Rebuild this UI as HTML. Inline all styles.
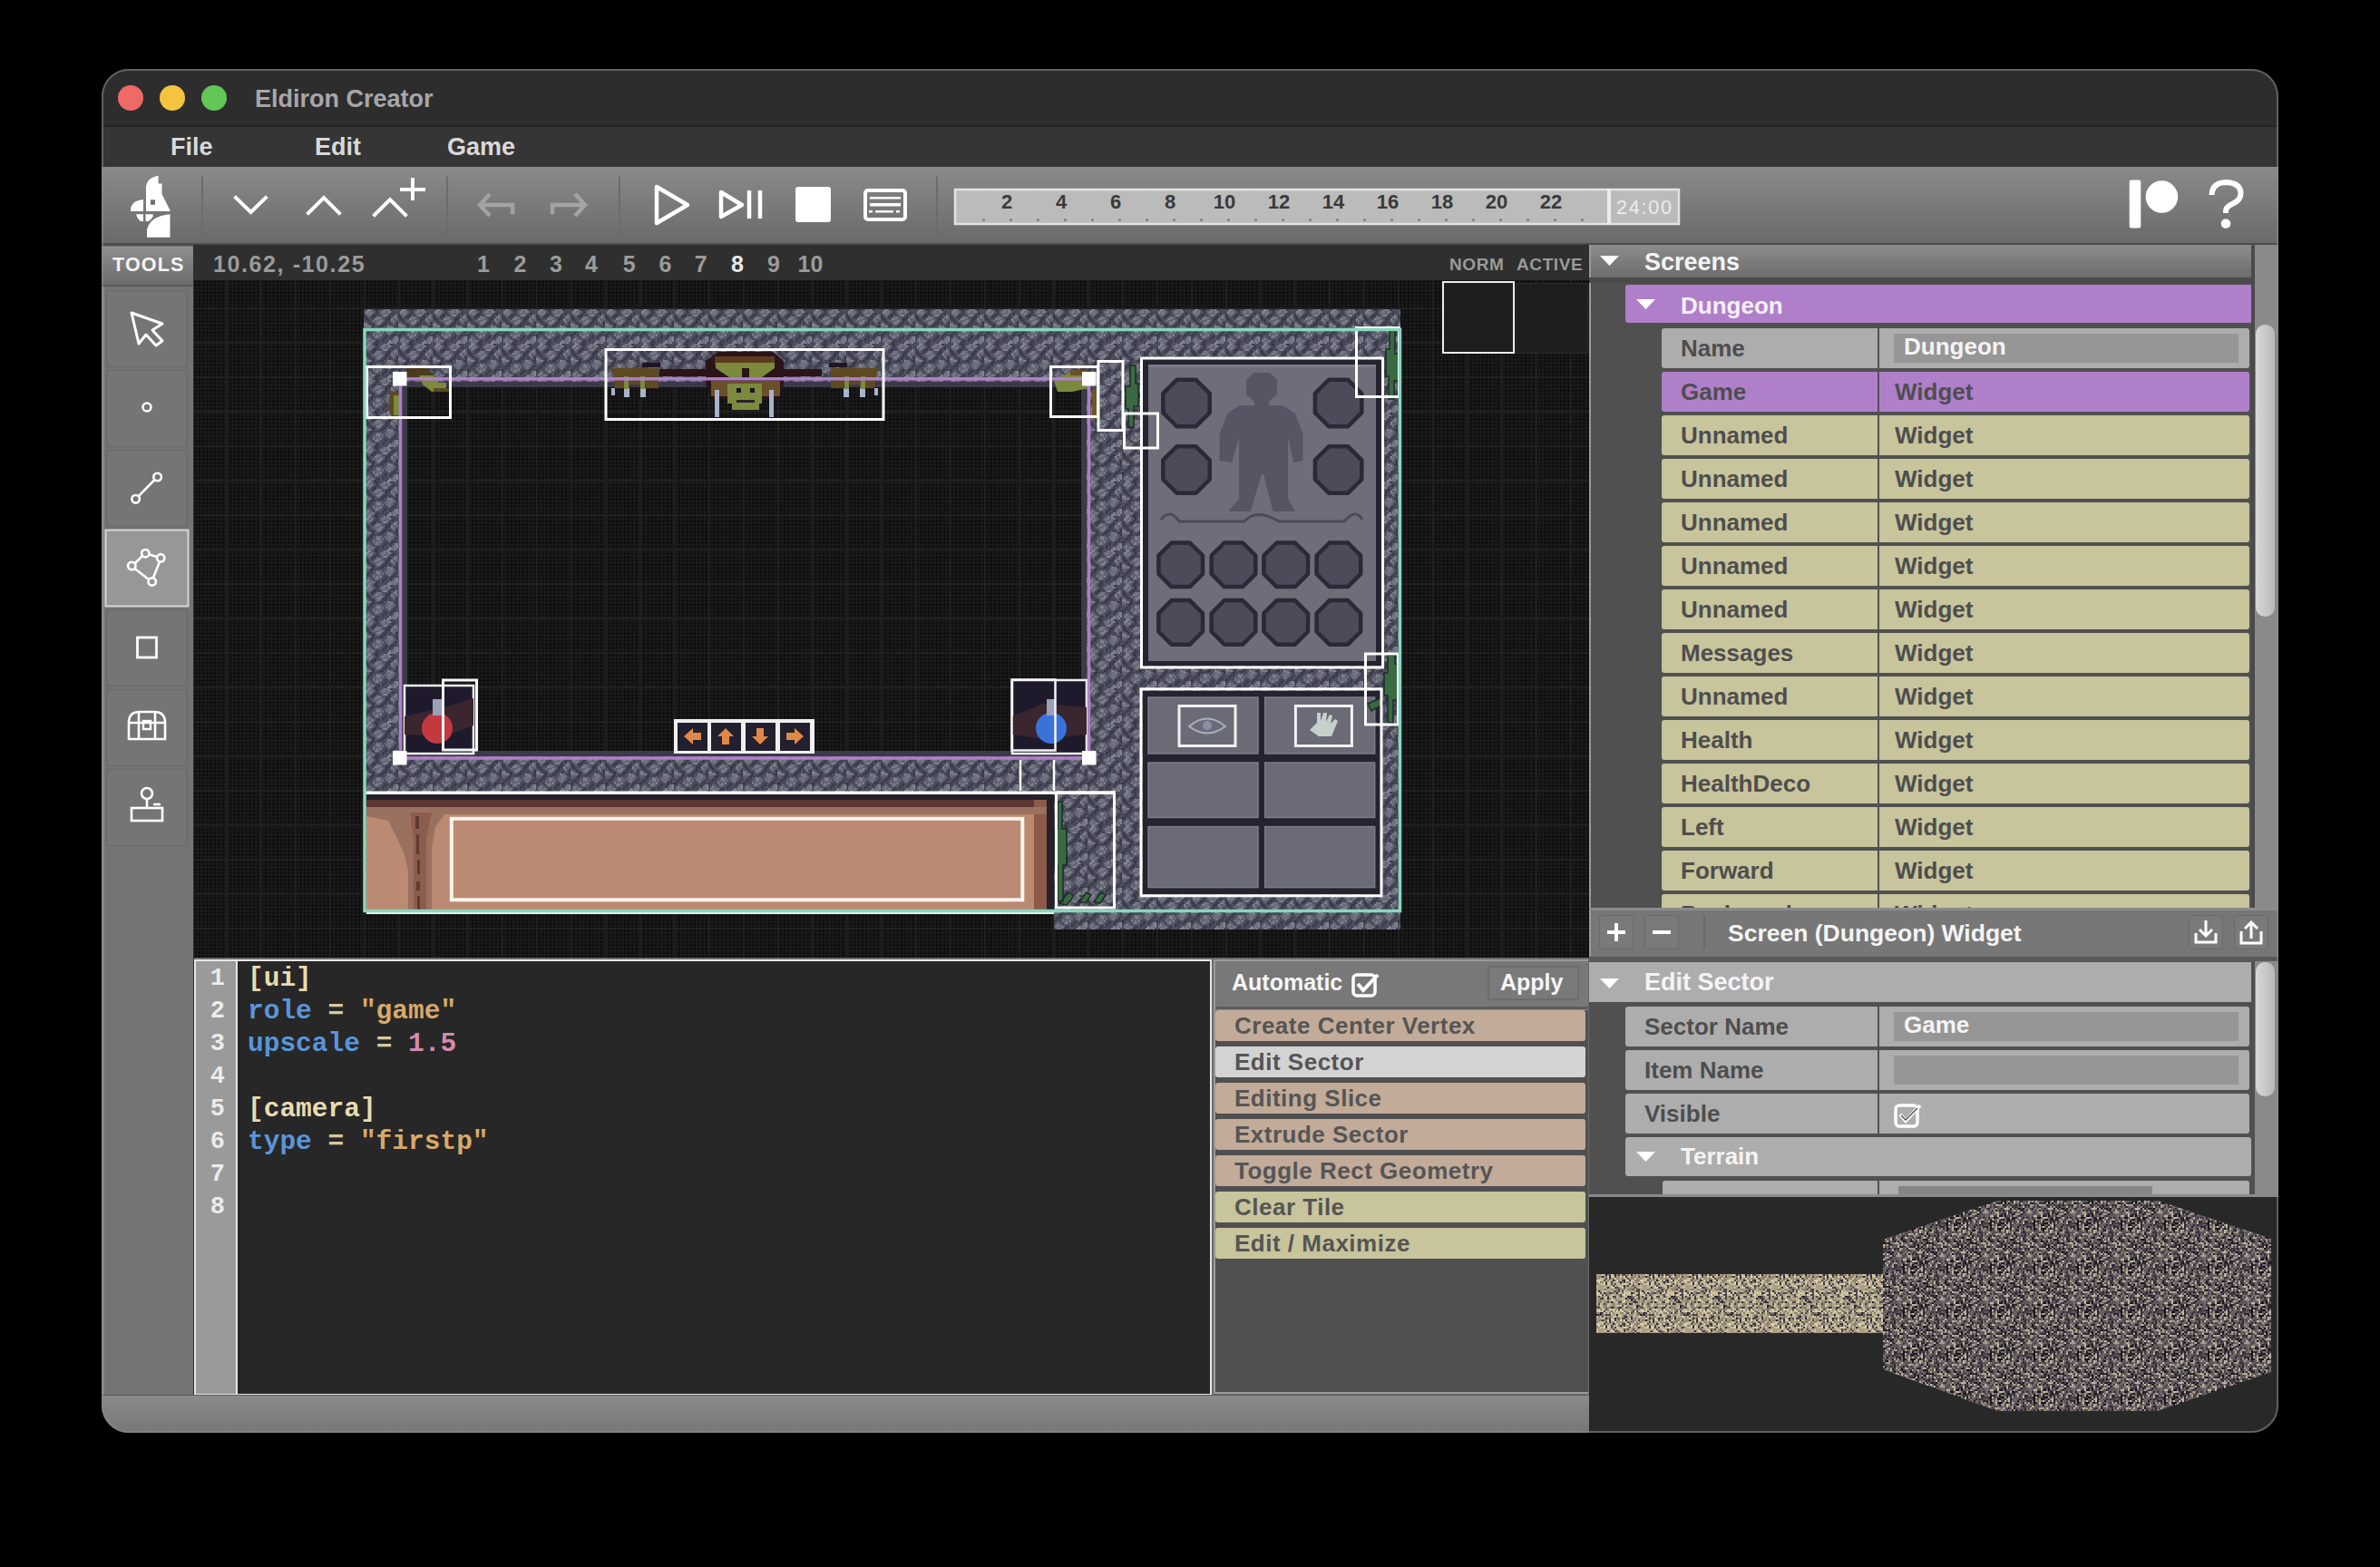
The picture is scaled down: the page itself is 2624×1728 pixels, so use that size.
<!DOCTYPE html>
<html><head><meta charset="utf-8">
<style>
*{margin:0;padding:0;box-sizing:border-box}
html,body{width:2624px;height:1728px;overflow:hidden;background:#000}
body{position:relative;font-family:"Liberation Sans",sans-serif}
.a{position:absolute}
#win{position:absolute;left:0;top:0;width:2624px;height:1728px;clip-path:inset(76px 112px 148px 112px round 30px);background:#2e2d2e}
.t{position:absolute;white-space:nowrap;line-height:1}
</style></head><body>
<div id="win">
  <!-- title bar -->
  <div class="a" style="left:112px;top:138px;width:2400px;height:2px;background:#232323"></div>
  <div class="a" style="left:130px;top:94px;width:28px;height:28px;border-radius:50%;background:#ee6a67"></div>
  <div class="a" style="left:176px;top:94px;width:28px;height:28px;border-radius:50%;background:#f5c43f"></div>
  <div class="a" style="left:222px;top:94px;width:28px;height:28px;border-radius:50%;background:#62c656"></div>
  <div class="t" style="left:281px;top:95.5px;font-size:27px;font-weight:bold;color:#a8a7a8">Eldiron Creator</div>
  <!-- menu bar -->
  <div class="a" style="left:112px;top:140px;width:2400px;height:44px;background:#353535"></div>
  <div class="t" style="left:188px;top:149px;font-size:27px;font-weight:bold;color:#d9d9d9">File</div>
  <div class="t" style="left:347px;top:149px;font-size:27px;font-weight:bold;color:#d9d9d9">Edit</div>
  <div class="t" style="left:493px;top:149px;font-size:27px;font-weight:bold;color:#d9d9d9">Game</div>
  <!-- toolbar -->
  <div class="a" style="left:112px;top:184px;width:2400px;height:84px;background:linear-gradient(#8a8a8a,#6a6a6a)"></div>
  <div class="a" style="left:112px;top:268px;width:2400px;height:3px;background:#4c4c4c"></div>


  <!-- toolbar icons -->
  <svg class="a" style="left:112px;top:184px" width="2400" height="84" viewBox="112 184 2400 84">
    <g fill="#fff">
      <path d="M161 233 V205 Q163 196 173 194 H174.5 V202.5 H178.5 V214 L187.5 232 V233 Z"/>
      <path d="M144.2 233 V229 Q146 221 158 220 V233 Z"/>
      <path d="M150.3 236.3 H158 V244 H155 Q150.3 240 150.3 236.3 Z"/>
      <path d="M160.5 236.3 H168.7 V239 Q166 243 163.5 244 H160.5 Z"/>
      <path d="M162 261.8 V253 Q166 238 187.5 236.3 V261.8 Z"/>
    </g>
    <rect x="166" y="220.3" width="5" height="5.5" fill="#6e6e6e"/>
    <g>
    <g stroke="#6c6c6c" stroke-width="2"><line x1="223" y1="194" x2="223" y2="259"/><line x1="493" y1="194" x2="493" y2="259"/><line x1="683" y1="194" x2="683" y2="259"/><line x1="1033" y1="194" x2="1033" y2="259"/></g>
    <g fill="none" stroke="#fff" stroke-width="4" stroke-linecap="square">
      <polyline points="260,218 276.5,234 293,218"/>
      <polyline points="340,235 357,218 374,235"/>
      <polyline points="413,237 430,220 447,237"/>
      <path d="M455 198 V219 M443 209 H467"/>
    </g>
    <g fill="none" stroke="#a3a3a3" stroke-width="4.5">
      <path d="M540 214 L529 226 L540 238 M529 226 H565 V236"/>
      <path d="M634 214 L645 226 L634 238 M645 226 H609 V236"/>
    </g>
    <g fill="none" stroke="#fff" stroke-width="4.5" stroke-linejoin="round">
      <path d="M724 206 L758 226 L724 246 Z"/>
      <path d="M795 212 L818 226 L795 239 Z"/>
      <path d="M826 210 V241 M838 210 V241"/>
    </g>
    <rect x="877" y="206" width="39" height="39" rx="3" fill="#fff"/>
    <rect x="954" y="210" width="44" height="32" rx="3" fill="none" stroke="#fff" stroke-width="4"/>
    <g fill="#fff"><rect x="959" y="217" width="34" height="2.5"/><rect x="959" y="224" width="34" height="3.5"/><rect x="958" y="232" width="4" height="2.5"/><rect x="965" y="232" width="20" height="2.5"/><rect x="988" y="232" width="4" height="2.5"/></g>
    <rect x="1053" y="209" width="798" height="38" fill="#bbbbbb" stroke="#e2e2e2" stroke-width="2.5"/>
    <rect x="1772" y="208" width="4" height="40" fill="#ececec"/>
    <g fill="#8a8a8a"><rect x="1083" y="241" width="3" height="3"/><rect x="1113" y="241" width="3" height="3"/><rect x="1143" y="241" width="3" height="3"/><rect x="1173" y="241" width="3" height="3"/><rect x="1203" y="241" width="3" height="3"/><rect x="1233" y="241" width="3" height="3"/><rect x="1263" y="241" width="3" height="3"/><rect x="1293" y="241" width="3" height="3"/><rect x="1323" y="241" width="3" height="3"/><rect x="1353" y="241" width="3" height="3"/><rect x="1383" y="241" width="3" height="3"/><rect x="1413" y="241" width="3" height="3"/><rect x="1443" y="241" width="3" height="3"/><rect x="1473" y="241" width="3" height="3"/><rect x="1503" y="241" width="3" height="3"/><rect x="1533" y="241" width="3" height="3"/><rect x="1563" y="241" width="3" height="3"/><rect x="1593" y="241" width="3" height="3"/><rect x="1623" y="241" width="3" height="3"/><rect x="1653" y="241" width="3" height="3"/><rect x="1683" y="241" width="3" height="3"/><rect x="1713" y="241" width="3" height="3"/><rect x="1743" y="241" width="3" height="3"/></g>
    <g font-family="Liberation Sans" font-weight="bold" font-size="22" fill="#3a3a3a" text-anchor="middle"><text x="1110" y="230">2</text><text x="1170" y="230">4</text><text x="1230" y="230">6</text><text x="1290" y="230">8</text><text x="1350" y="230">10</text><text x="1410" y="230">12</text><text x="1470" y="230">14</text><text x="1530" y="230">16</text><text x="1590" y="230">18</text><text x="1650" y="230">20</text><text x="1710" y="230">22</text></g>
    <text x="1782" y="235.5" font-family="Liberation Sans" font-size="21.5" letter-spacing="1.8" fill="#ececec">24:00</text>
    <rect x="2347.7" y="198.5" width="12.6" height="53" rx="2" fill="#fff"/>
    <circle cx="2383.4" cy="217" r="17.8" fill="#fff"/>
    <path d="M2438.5 215 Q2439 201.5 2454 201 Q2470 201.5 2470.5 213 Q2470.5 221 2461 225 Q2454 228 2454 233 V235" fill="none" stroke="#fff" stroke-width="6" stroke-linecap="butt"/>
    <circle cx="2454" cy="246.5" r="5.3" fill="#fff"/>
  </svg>

  <!-- tools panel -->
  <div class="a" style="left:112px;top:271px;width:101px;height:1268px;background:#747474"></div>
  <div class="a" style="left:112px;top:272px;width:101px;height:42px;background:linear-gradient(#8e8e8e,#6c6c6c)"></div>
  <div class="a" style="left:112px;top:314px;width:101px;height:2px;background:#5a5a5a"></div>
  <div class="t" style="left:124px;top:282px;font-size:21.5px;letter-spacing:1.2px;font-weight:bold;color:#f4f4f4">TOOLS</div>

  <!-- editor header -->
  <div class="a" style="left:213px;top:270px;width:1539px;height:40px;background:#2f2f2f"></div>
  <!-- tool buttons -->
  <div class="a" style="left:112px;top:316px;width:3px;height:1222px;background:#8a8a8a"></div>
  <svg class="a" style="left:112px;top:316px" width="101" height="1222" viewBox="112 316 101 1222">
    <rect x="117.5" y="320.5" width="89" height="84" fill="#757575" stroke="#6b6b6b" stroke-width="1.5"/><rect x="117.5" y="408.5" width="89" height="84" fill="#757575" stroke="#6b6b6b" stroke-width="1.5"/><rect x="117.5" y="496.5" width="89" height="84" fill="#757575" stroke="#6b6b6b" stroke-width="1.5"/><rect x="117.5" y="584.5" width="89" height="84" fill="#757575" stroke="#6b6b6b" stroke-width="1.5"/><rect x="117.5" y="672.5" width="89" height="84" fill="#757575" stroke="#6b6b6b" stroke-width="1.5"/><rect x="117.5" y="760.5" width="89" height="84" fill="#757575" stroke="#6b6b6b" stroke-width="1.5"/><rect x="117.5" y="848.5" width="89" height="84" fill="#757575" stroke="#6b6b6b" stroke-width="1.5"/>
    <rect x="116.5" y="584.5" width="91" height="84" fill="#979797" stroke="#d6d6d6" stroke-width="2"/>
    <g fill="none" stroke="#fff" stroke-width="2.6">
      <path d="M145 345 L179 357 L168 364 L179 376 L172 381 L161 369 L153 379 Z" stroke-linejoin="round" stroke-width="3"/>
      <circle cx="162" cy="449" r="4.5"/>
      <circle cx="173.6" cy="526" r="4.3"/><circle cx="149.6" cy="550.3" r="4.3"/><line x1="170.5" y1="529" x2="152.6" y2="547.3"/>
      <circle cx="160.3" cy="610.2" r="4.2"/><circle cx="177.2" cy="615.3" r="4.2"/><circle cx="145.3" cy="624" r="4.2"/><circle cx="167.7" cy="641.4" r="4.2"/>
      <path d="M149 621 L157 613 M164.5 611.5 L173 614 M176 619.5 L169 637 M164 639 L148.5 627"/>
      <rect x="151.5" y="703" width="21" height="22" stroke-width="2.8"/>
      <path d="M142 815 V797 Q142 785 154 785 H170 Q182 785 182 797 V815 Z M142 797 H182 M153 785 V815 M171 785 V815" stroke-width="2.6"/>
      <rect x="158" y="795" width="8" height="9" stroke-width="2.4"/>
      <circle cx="162" cy="875" r="6"/><line x1="162" y1="881" x2="162" y2="891"/><rect x="145" y="891" width="34" height="14"/><line x1="169" y1="887" x2="177" y2="887"/>
    </g>
  </svg>
  <!-- editor header texts -->
  <div class="t" style="left:235px;top:279px;font-size:25px;font-weight:bold;letter-spacing:1.6px;color:#9b9b9b">10.62, -10.25</div>
  <div class="t" style="left:493px;width:80px;text-align:center;top:279px;font-size:25px;font-weight:bold;color:#9b9b9b">1</div><div class="t" style="left:533.5px;width:80px;text-align:center;top:279px;font-size:25px;font-weight:bold;color:#9b9b9b">2</div><div class="t" style="left:573px;width:80px;text-align:center;top:279px;font-size:25px;font-weight:bold;color:#9b9b9b">3</div><div class="t" style="left:612px;width:80px;text-align:center;top:279px;font-size:25px;font-weight:bold;color:#9b9b9b">4</div><div class="t" style="left:653.6px;width:80px;text-align:center;top:279px;font-size:25px;font-weight:bold;color:#9b9b9b">5</div><div class="t" style="left:693.5px;width:80px;text-align:center;top:279px;font-size:25px;font-weight:bold;color:#9b9b9b">6</div><div class="t" style="left:732.6px;width:80px;text-align:center;top:279px;font-size:25px;font-weight:bold;color:#9b9b9b">7</div><div class="t" style="left:773px;width:80px;text-align:center;top:279px;font-size:25px;font-weight:bold;color:#e8e8e8">8</div><div class="t" style="left:813px;width:80px;text-align:center;top:279px;font-size:25px;font-weight:bold;color:#9b9b9b">9</div><div class="t" style="left:853.5px;width:80px;text-align:center;top:279px;font-size:25px;font-weight:bold;color:#9b9b9b">10</div>
  <div class="t" style="left:1598px;top:281.5px;font-size:19px;letter-spacing:0.6px;font-weight:bold;color:#9a9a9a">NORM</div>
  <div class="t" style="left:1672px;top:281.5px;font-size:19px;letter-spacing:0.6px;font-weight:bold;color:#9a9a9a">ACTIVE</div>

  <!-- map grid -->
  <svg class="a" style="left:214px;top:309px" width="1538" height="748">
    <defs>
      <pattern id="dots" x="0" y="0" width="4.3" height="4" patternUnits="userSpaceOnUse"><rect width="4.3" height="4" fill="#1a1a1a"/><rect x="0.5" y="0.5" width="2.2" height="2.2" fill="#080808"/></pattern>
      <pattern id="maj" x="-1.2" y="-6" width="38" height="38" patternUnits="userSpaceOnUse"><rect x="36" y="0" width="2" height="38" fill="#202020"/><rect x="0" y="36" width="38" height="2" fill="#202020"/></pattern>
    </defs>
    <rect width="1538" height="748" fill="url(#dots)"/>
    <rect width="1538" height="748" fill="url(#maj)"/>
  </svg>
  <div class="a" style="left:1590px;top:310px;width:80px;height:80px;background:#1e1e1e;border:2.5px solid #ececec"></div>
  <div class="a" style="left:1671px;top:312px;width:80px;height:78px;background:#1e1e1e;border:1px solid #2e2e2e"></div>
  <!-- MAP -->
  <svg class="a" style="left:214px;top:309px" width="1538" height="748" viewBox="214 309 1538 748">
    <defs><pattern id="stone" x="401" y="341" width="38" height="38" patternUnits="userSpaceOnUse"><rect width="38" height="38" fill="#4a4c5c"/><rect x="4" y="0" width="2" height="2" fill="#828490"/><rect x="6" y="0" width="2" height="2" fill="#828490"/><rect x="8" y="0" width="2" height="2" fill="#5e606e"/><rect x="12" y="0" width="2" height="2" fill="#383846"/><rect x="14" y="0" width="2" height="2" fill="#383846"/><rect x="20" y="0" width="2" height="2" fill="#5e606e"/><rect x="22" y="0" width="2" height="2" fill="#767886"/><rect x="24" y="0" width="2" height="2" fill="#6c6e7c"/><rect x="26" y="0" width="2" height="2" fill="#828490"/><rect x="28" y="0" width="2" height="2" fill="#545666"/><rect x="30" y="0" width="2" height="2" fill="#383846"/><rect x="32" y="0" width="2" height="2" fill="#4e5060"/><rect x="36" y="0" width="2" height="2" fill="#4e5060"/><rect x="2" y="2" width="2" height="2" fill="#828490"/><rect x="4" y="2" width="2" height="2" fill="#828490"/><rect x="6" y="2" width="2" height="2" fill="#5e606e"/><rect x="8" y="2" width="2" height="2" fill="#767886"/><rect x="10" y="2" width="2" height="2" fill="#5e606e"/><rect x="12" y="2" width="2" height="2" fill="#4e5060"/><rect x="14" y="2" width="2" height="2" fill="#383846"/><rect x="16" y="2" width="2" height="2" fill="#4e5060"/><rect x="18" y="2" width="2" height="2" fill="#6c6e7c"/><rect x="20" y="2" width="2" height="2" fill="#767886"/><rect x="22" y="2" width="2" height="2" fill="#767886"/><rect x="24" y="2" width="2" height="2" fill="#5e606e"/><rect x="26" y="2" width="2" height="2" fill="#6c6e7c"/><rect x="28" y="2" width="2" height="2" fill="#828490"/><rect x="30" y="2" width="2" height="2" fill="#545666"/><rect x="32" y="2" width="2" height="2" fill="#40404e"/><rect x="36" y="2" width="2" height="2" fill="#464858"/><rect x="2" y="4" width="2" height="2" fill="#767886"/><rect x="4" y="4" width="2" height="2" fill="#646674"/><rect x="6" y="4" width="2" height="2" fill="#828490"/><rect x="8" y="4" width="2" height="2" fill="#6c6e7c"/><rect x="10" y="4" width="2" height="2" fill="#4e5060"/><rect x="12" y="4" width="2" height="2" fill="#40404e"/><rect x="14" y="4" width="2" height="2" fill="#40404e"/><rect x="18" y="4" width="2" height="2" fill="#5e606e"/><rect x="20" y="4" width="2" height="2" fill="#6c6e7c"/><rect x="22" y="4" width="2" height="2" fill="#646674"/><rect x="24" y="4" width="2" height="2" fill="#646674"/><rect x="26" y="4" width="2" height="2" fill="#767886"/><rect x="30" y="4" width="2" height="2" fill="#40404e"/><rect x="32" y="4" width="2" height="2" fill="#383846"/><rect x="34" y="4" width="2" height="2" fill="#4e5060"/><rect x="0" y="6" width="2" height="2" fill="#383846"/><rect x="4" y="6" width="2" height="2" fill="#6c6e7c"/><rect x="6" y="6" width="2" height="2" fill="#646674"/><rect x="10" y="6" width="2" height="2" fill="#383846"/><rect x="12" y="6" width="2" height="2" fill="#383846"/><rect x="14" y="6" width="2" height="2" fill="#4e5060"/><rect x="16" y="6" width="2" height="2" fill="#464858"/><rect x="18" y="6" width="2" height="2" fill="#464858"/><rect x="20" y="6" width="2" height="2" fill="#6c6e7c"/><rect x="22" y="6" width="2" height="2" fill="#828490"/><rect x="24" y="6" width="2" height="2" fill="#828490"/><rect x="28" y="6" width="2" height="2" fill="#40404e"/><rect x="30" y="6" width="2" height="2" fill="#4e5060"/><rect x="34" y="6" width="2" height="2" fill="#767886"/><rect x="36" y="6" width="2" height="2" fill="#646674"/><rect x="0" y="8" width="2" height="2" fill="#40404e"/><rect x="2" y="8" width="2" height="2" fill="#383846"/><rect x="4" y="8" width="2" height="2" fill="#545666"/><rect x="6" y="8" width="2" height="2" fill="#545666"/><rect x="8" y="8" width="2" height="2" fill="#383846"/><rect x="10" y="8" width="2" height="2" fill="#40404e"/><rect x="12" y="8" width="2" height="2" fill="#4e5060"/><rect x="14" y="8" width="2" height="2" fill="#767886"/><rect x="16" y="8" width="2" height="2" fill="#767886"/><rect x="18" y="8" width="2" height="2" fill="#6c6e7c"/><rect x="20" y="8" width="2" height="2" fill="#4e5060"/><rect x="22" y="8" width="2" height="2" fill="#4e5060"/><rect x="26" y="8" width="2" height="2" fill="#40404e"/><rect x="28" y="8" width="2" height="2" fill="#383846"/><rect x="32" y="8" width="2" height="2" fill="#767886"/><rect x="34" y="8" width="2" height="2" fill="#828490"/><rect x="36" y="8" width="2" height="2" fill="#5e606e"/><rect x="0" y="10" width="2" height="2" fill="#464858"/><rect x="2" y="10" width="2" height="2" fill="#383846"/><rect x="4" y="10" width="2" height="2" fill="#40404e"/><rect x="8" y="10" width="2" height="2" fill="#4e5060"/><rect x="12" y="10" width="2" height="2" fill="#828490"/><rect x="14" y="10" width="2" height="2" fill="#767886"/><rect x="16" y="10" width="2" height="2" fill="#6c6e7c"/><rect x="18" y="10" width="2" height="2" fill="#646674"/><rect x="20" y="10" width="2" height="2" fill="#5e606e"/><rect x="22" y="10" width="2" height="2" fill="#545666"/><rect x="24" y="10" width="2" height="2" fill="#383846"/><rect x="26" y="10" width="2" height="2" fill="#383846"/><rect x="28" y="10" width="2" height="2" fill="#464858"/><rect x="30" y="10" width="2" height="2" fill="#828490"/><rect x="32" y="10" width="2" height="2" fill="#5e606e"/><rect x="34" y="10" width="2" height="2" fill="#5e606e"/><rect x="36" y="10" width="2" height="2" fill="#6c6e7c"/><rect x="0" y="12" width="2" height="2" fill="#4e5060"/><rect x="2" y="12" width="2" height="2" fill="#464858"/><rect x="4" y="12" width="2" height="2" fill="#383846"/><rect x="8" y="12" width="2" height="2" fill="#545666"/><rect x="10" y="12" width="2" height="2" fill="#6c6e7c"/><rect x="12" y="12" width="2" height="2" fill="#5e606e"/><rect x="14" y="12" width="2" height="2" fill="#646674"/><rect x="16" y="12" width="2" height="2" fill="#646674"/><rect x="18" y="12" width="2" height="2" fill="#828490"/><rect x="20" y="12" width="2" height="2" fill="#6c6e7c"/><rect x="22" y="12" width="2" height="2" fill="#4e5060"/><rect x="24" y="12" width="2" height="2" fill="#383846"/><rect x="26" y="12" width="2" height="2" fill="#464858"/><rect x="30" y="12" width="2" height="2" fill="#767886"/><rect x="32" y="12" width="2" height="2" fill="#6c6e7c"/><rect x="34" y="12" width="2" height="2" fill="#5e606e"/><rect x="36" y="12" width="2" height="2" fill="#545666"/><rect x="0" y="14" width="2" height="2" fill="#646674"/><rect x="2" y="14" width="2" height="2" fill="#5e606e"/><rect x="6" y="14" width="2" height="2" fill="#383846"/><rect x="12" y="14" width="2" height="2" fill="#5e606e"/><rect x="14" y="14" width="2" height="2" fill="#767886"/><rect x="16" y="14" width="2" height="2" fill="#828490"/><rect x="18" y="14" width="2" height="2" fill="#767886"/><rect x="20" y="14" width="2" height="2" fill="#464858"/><rect x="22" y="14" width="2" height="2" fill="#40404e"/><rect x="24" y="14" width="2" height="2" fill="#383846"/><rect x="28" y="14" width="2" height="2" fill="#464858"/><rect x="30" y="14" width="2" height="2" fill="#464858"/><rect x="32" y="14" width="2" height="2" fill="#767886"/><rect x="36" y="14" width="2" height="2" fill="#383846"/><rect x="0" y="16" width="2" height="2" fill="#828490"/><rect x="2" y="16" width="2" height="2" fill="#828490"/><rect x="4" y="16" width="2" height="2" fill="#5e606e"/><rect x="6" y="16" width="2" height="2" fill="#4e5060"/><rect x="8" y="16" width="2" height="2" fill="#40404e"/><rect x="10" y="16" width="2" height="2" fill="#383846"/><rect x="12" y="16" width="2" height="2" fill="#4e5060"/><rect x="14" y="16" width="2" height="2" fill="#6c6e7c"/><rect x="16" y="16" width="2" height="2" fill="#6c6e7c"/><rect x="20" y="16" width="2" height="2" fill="#40404e"/><rect x="22" y="16" width="2" height="2" fill="#383846"/><rect x="26" y="16" width="2" height="2" fill="#545666"/><rect x="28" y="16" width="2" height="2" fill="#40404e"/><rect x="34" y="16" width="2" height="2" fill="#545666"/><rect x="36" y="16" width="2" height="2" fill="#383846"/><rect x="0" y="18" width="2" height="2" fill="#6c6e7c"/><rect x="2" y="18" width="2" height="2" fill="#767886"/><rect x="4" y="18" width="2" height="2" fill="#767886"/><rect x="6" y="18" width="2" height="2" fill="#828490"/><rect x="10" y="18" width="2" height="2" fill="#383846"/><rect x="12" y="18" width="2" height="2" fill="#545666"/><rect x="14" y="18" width="2" height="2" fill="#464858"/><rect x="16" y="18" width="2" height="2" fill="#464858"/><rect x="18" y="18" width="2" height="2" fill="#383846"/><rect x="20" y="18" width="2" height="2" fill="#383846"/><rect x="22" y="18" width="2" height="2" fill="#545666"/><rect x="26" y="18" width="2" height="2" fill="#828490"/><rect x="28" y="18" width="2" height="2" fill="#767886"/><rect x="30" y="18" width="2" height="2" fill="#6c6e7c"/><rect x="32" y="18" width="2" height="2" fill="#4e5060"/><rect x="34" y="18" width="2" height="2" fill="#383846"/><rect x="36" y="18" width="2" height="2" fill="#40404e"/><rect x="0" y="20" width="2" height="2" fill="#646674"/><rect x="2" y="20" width="2" height="2" fill="#5e606e"/><rect x="4" y="20" width="2" height="2" fill="#5e606e"/><rect x="6" y="20" width="2" height="2" fill="#464858"/><rect x="8" y="20" width="2" height="2" fill="#383846"/><rect x="10" y="20" width="2" height="2" fill="#40404e"/><rect x="12" y="20" width="2" height="2" fill="#464858"/><rect x="16" y="20" width="2" height="2" fill="#40404e"/><rect x="22" y="20" width="2" height="2" fill="#464858"/><rect x="24" y="20" width="2" height="2" fill="#5e606e"/><rect x="26" y="20" width="2" height="2" fill="#6c6e7c"/><rect x="28" y="20" width="2" height="2" fill="#6c6e7c"/><rect x="30" y="20" width="2" height="2" fill="#828490"/><rect x="32" y="20" width="2" height="2" fill="#646674"/><rect x="34" y="20" width="2" height="2" fill="#545666"/><rect x="36" y="20" width="2" height="2" fill="#383846"/><rect x="0" y="22" width="2" height="2" fill="#4e5060"/><rect x="2" y="22" width="2" height="2" fill="#5e606e"/><rect x="4" y="22" width="2" height="2" fill="#4e5060"/><rect x="6" y="22" width="2" height="2" fill="#40404e"/><rect x="8" y="22" width="2" height="2" fill="#383846"/><rect x="10" y="22" width="2" height="2" fill="#545666"/><rect x="12" y="22" width="2" height="2" fill="#545666"/><rect x="14" y="22" width="2" height="2" fill="#767886"/><rect x="16" y="22" width="2" height="2" fill="#6c6e7c"/><rect x="18" y="22" width="2" height="2" fill="#6c6e7c"/><rect x="22" y="22" width="2" height="2" fill="#5e606e"/><rect x="24" y="22" width="2" height="2" fill="#646674"/><rect x="26" y="22" width="2" height="2" fill="#6c6e7c"/><rect x="28" y="22" width="2" height="2" fill="#767886"/><rect x="30" y="22" width="2" height="2" fill="#646674"/><rect x="32" y="22" width="2" height="2" fill="#646674"/><rect x="34" y="22" width="2" height="2" fill="#4e5060"/><rect x="0" y="24" width="2" height="2" fill="#4e5060"/><rect x="4" y="24" width="2" height="2" fill="#383846"/><rect x="6" y="24" width="2" height="2" fill="#40404e"/><rect x="10" y="24" width="2" height="2" fill="#4e5060"/><rect x="12" y="24" width="2" height="2" fill="#5e606e"/><rect x="14" y="24" width="2" height="2" fill="#828490"/><rect x="16" y="24" width="2" height="2" fill="#828490"/><rect x="18" y="24" width="2" height="2" fill="#5e606e"/><rect x="20" y="24" width="2" height="2" fill="#6c6e7c"/><rect x="24" y="24" width="2" height="2" fill="#6c6e7c"/><rect x="26" y="24" width="2" height="2" fill="#6c6e7c"/><rect x="28" y="24" width="2" height="2" fill="#6c6e7c"/><rect x="30" y="24" width="2" height="2" fill="#6c6e7c"/><rect x="32" y="24" width="2" height="2" fill="#545666"/><rect x="34" y="24" width="2" height="2" fill="#40404e"/><rect x="36" y="24" width="2" height="2" fill="#40404e"/><rect x="2" y="26" width="2" height="2" fill="#40404e"/><rect x="4" y="26" width="2" height="2" fill="#40404e"/><rect x="10" y="26" width="2" height="2" fill="#6c6e7c"/><rect x="12" y="26" width="2" height="2" fill="#5e606e"/><rect x="14" y="26" width="2" height="2" fill="#5e606e"/><rect x="16" y="26" width="2" height="2" fill="#6c6e7c"/><rect x="18" y="26" width="2" height="2" fill="#646674"/><rect x="20" y="26" width="2" height="2" fill="#5e606e"/><rect x="22" y="26" width="2" height="2" fill="#4e5060"/><rect x="26" y="26" width="2" height="2" fill="#6c6e7c"/><rect x="28" y="26" width="2" height="2" fill="#767886"/><rect x="30" y="26" width="2" height="2" fill="#4e5060"/><rect x="32" y="26" width="2" height="2" fill="#40404e"/><rect x="34" y="26" width="2" height="2" fill="#40404e"/><rect x="36" y="26" width="2" height="2" fill="#545666"/><rect x="0" y="28" width="2" height="2" fill="#383846"/><rect x="2" y="28" width="2" height="2" fill="#40404e"/><rect x="4" y="28" width="2" height="2" fill="#545666"/><rect x="6" y="28" width="2" height="2" fill="#464858"/><rect x="10" y="28" width="2" height="2" fill="#767886"/><rect x="12" y="28" width="2" height="2" fill="#5e606e"/><rect x="14" y="28" width="2" height="2" fill="#767886"/><rect x="16" y="28" width="2" height="2" fill="#646674"/><rect x="18" y="28" width="2" height="2" fill="#828490"/><rect x="22" y="28" width="2" height="2" fill="#464858"/><rect x="24" y="28" width="2" height="2" fill="#40404e"/><rect x="28" y="28" width="2" height="2" fill="#545666"/><rect x="30" y="28" width="2" height="2" fill="#383846"/><rect x="32" y="28" width="2" height="2" fill="#40404e"/><rect x="34" y="28" width="2" height="2" fill="#464858"/><rect x="36" y="28" width="2" height="2" fill="#464858"/><rect x="0" y="30" width="2" height="2" fill="#40404e"/><rect x="2" y="30" width="2" height="2" fill="#464858"/><rect x="4" y="30" width="2" height="2" fill="#5e606e"/><rect x="6" y="30" width="2" height="2" fill="#646674"/><rect x="8" y="30" width="2" height="2" fill="#464858"/><rect x="10" y="30" width="2" height="2" fill="#464858"/><rect x="12" y="30" width="2" height="2" fill="#767886"/><rect x="14" y="30" width="2" height="2" fill="#828490"/><rect x="16" y="30" width="2" height="2" fill="#646674"/><rect x="18" y="30" width="2" height="2" fill="#4e5060"/><rect x="20" y="30" width="2" height="2" fill="#4e5060"/><rect x="22" y="30" width="2" height="2" fill="#40404e"/><rect x="24" y="30" width="2" height="2" fill="#383846"/><rect x="26" y="30" width="2" height="2" fill="#4e5060"/><rect x="28" y="30" width="2" height="2" fill="#40404e"/><rect x="30" y="30" width="2" height="2" fill="#40404e"/><rect x="32" y="30" width="2" height="2" fill="#545666"/><rect x="34" y="30" width="2" height="2" fill="#767886"/><rect x="36" y="30" width="2" height="2" fill="#828490"/><rect x="2" y="32" width="2" height="2" fill="#5e606e"/><rect x="4" y="32" width="2" height="2" fill="#828490"/><rect x="6" y="32" width="2" height="2" fill="#646674"/><rect x="8" y="32" width="2" height="2" fill="#5e606e"/><rect x="12" y="32" width="2" height="2" fill="#545666"/><rect x="14" y="32" width="2" height="2" fill="#4e5060"/><rect x="16" y="32" width="2" height="2" fill="#4e5060"/><rect x="18" y="32" width="2" height="2" fill="#545666"/><rect x="20" y="32" width="2" height="2" fill="#383846"/><rect x="22" y="32" width="2" height="2" fill="#40404e"/><rect x="26" y="32" width="2" height="2" fill="#545666"/><rect x="28" y="32" width="2" height="2" fill="#40404e"/><rect x="32" y="32" width="2" height="2" fill="#6c6e7c"/><rect x="34" y="32" width="2" height="2" fill="#767886"/><rect x="36" y="32" width="2" height="2" fill="#828490"/><rect x="2" y="34" width="2" height="2" fill="#767886"/><rect x="4" y="34" width="2" height="2" fill="#6c6e7c"/><rect x="6" y="34" width="2" height="2" fill="#646674"/><rect x="8" y="34" width="2" height="2" fill="#767886"/><rect x="10" y="34" width="2" height="2" fill="#767886"/><rect x="12" y="34" width="2" height="2" fill="#4e5060"/><rect x="14" y="34" width="2" height="2" fill="#383846"/><rect x="16" y="34" width="2" height="2" fill="#40404e"/><rect x="18" y="34" width="2" height="2" fill="#4e5060"/><rect x="20" y="34" width="2" height="2" fill="#40404e"/><rect x="22" y="34" width="2" height="2" fill="#4e5060"/><rect x="24" y="34" width="2" height="2" fill="#464858"/><rect x="26" y="34" width="2" height="2" fill="#464858"/><rect x="28" y="34" width="2" height="2" fill="#828490"/><rect x="30" y="34" width="2" height="2" fill="#646674"/><rect x="32" y="34" width="2" height="2" fill="#767886"/><rect x="34" y="34" width="2" height="2" fill="#6c6e7c"/><rect x="36" y="34" width="2" height="2" fill="#828490"/><rect x="2" y="36" width="2" height="2" fill="#4e5060"/><rect x="4" y="36" width="2" height="2" fill="#767886"/><rect x="6" y="36" width="2" height="2" fill="#767886"/><rect x="8" y="36" width="2" height="2" fill="#646674"/><rect x="10" y="36" width="2" height="2" fill="#545666"/><rect x="12" y="36" width="2" height="2" fill="#383846"/><rect x="14" y="36" width="2" height="2" fill="#40404e"/><rect x="16" y="36" width="2" height="2" fill="#464858"/><rect x="18" y="36" width="2" height="2" fill="#4e5060"/><rect x="24" y="36" width="2" height="2" fill="#464858"/><rect x="26" y="36" width="2" height="2" fill="#828490"/><rect x="28" y="36" width="2" height="2" fill="#828490"/><rect x="30" y="36" width="2" height="2" fill="#767886"/><rect x="32" y="36" width="2" height="2" fill="#6c6e7c"/><rect x="34" y="36" width="2" height="2" fill="#828490"/></pattern>
      <pattern id="dots2" x="0" y="0" width="4.3" height="4" patternUnits="userSpaceOnUse"><rect width="4.3" height="4" fill="#1a1a1a"/><rect x="0.5" y="0.5" width="2.2" height="2.2" fill="#0a0a0a"/></pattern>
    </defs>
    <path fill="url(#stone)" fill-rule="evenodd" d="M401 341 H1544 V1025 H1162 V1006 H401 Z M443 421 H1198 V834 H443 Z"/>
    <!-- interior shadow -->
    <path fill="#3a3a48" fill-rule="evenodd" d="M443 421 H1198 V834 H443 Z M449 427 H1192 V828 H449 Z"/>
    <!-- brown message panel -->
    <rect x="404" y="876" width="758" height="128" fill="#25202a"/>
    <rect x="404" y="882" width="750" height="122" fill="#bb8a72"/>
    <rect x="404" y="882" width="750" height="8" fill="#5c3530"/>
    <rect x="404" y="890" width="750" height="6" fill="#8c5a48"/>
    <rect x="1140" y="882" width="14" height="122" fill="#8c5a48"/>
    <path d="M404 890 H1154 V898 H490 L480 912 L476 935 V1004 H450 V960 L446 942 L438 925 L428 905 L404 900 Z" fill="#9a705e"/><path d="M452 896 H476 L470 925 V1004 H456 V925 Z" fill="#8c5c4c"/>
    <g fill="#5e3a32"><rect x="458" y="900" width="4" height="14"/><rect x="459" y="920" width="3" height="22"/><rect x="460" y="948" width="3" height="16"/><rect x="459" y="972" width="4" height="10"/><rect x="460" y="988" width="3" height="16"/></g>
    <rect x="497.8" y="902.8" width="629.5" height="89.5" fill="none" stroke="#fbf3ee" stroke-width="4"/>
    <rect x="402.5" y="872.5" width="827" height="3.5" fill="#fff"/>
    
    <!-- inventory panel -->
    <rect x="1260" y="396" width="263" height="338" fill="#25232f"/>
    <rect x="1266" y="402" width="251" height="327" fill="#6e6e7b"/>
    <rect x="1266" y="402" width="251" height="3" fill="#7c7c88"/>
    <g fill="#4b4b5a" stroke="#2a2a36" stroke-width="4.5" stroke-linejoin="round"><polygon points="1333.7,455.1 1318.6,470.2 1297.4,470.2 1282.3,455.1 1282.3,433.9 1297.4,418.8 1318.6,418.8 1333.7,433.9"/><polygon points="1501.3,455.1 1486.2,470.2 1465.0,470.2 1449.9,455.1 1449.9,433.9 1465.0,418.8 1486.2,418.8 1501.3,433.9"/><polygon points="1333.7,528.6 1318.6,543.7 1297.4,543.7 1282.3,528.6 1282.3,507.4 1297.4,492.3 1318.6,492.3 1333.7,507.4"/><polygon points="1501.3,528.6 1486.2,543.7 1465.0,543.7 1449.9,528.6 1449.9,507.4 1465.0,492.3 1486.2,492.3 1501.3,507.4"/><polygon points="1326.0,632.9 1311.8,647.1 1291.6,647.1 1277.4,632.9 1277.4,612.7 1291.6,598.5 1311.8,598.5 1326.0,612.7"/><polygon points="1384.3,632.9 1370.1,647.1 1349.9,647.1 1335.7,632.9 1335.7,612.7 1349.9,598.5 1370.1,598.5 1384.3,612.7"/><polygon points="1442.0,632.9 1427.8,647.1 1407.6,647.1 1393.4,632.9 1393.4,612.7 1407.6,598.5 1427.8,598.5 1442.0,612.7"/><polygon points="1500.2,632.9 1486.0,647.1 1465.8,647.1 1451.6,632.9 1451.6,612.7 1465.8,598.5 1486.0,598.5 1500.2,612.7"/><polygon points="1326.0,696.5 1311.8,710.7 1291.6,710.7 1277.4,696.5 1277.4,676.3 1291.6,662.1 1311.8,662.1 1326.0,676.3"/><polygon points="1384.3,696.5 1370.1,710.7 1349.9,710.7 1335.7,696.5 1335.7,676.3 1349.9,662.1 1370.1,662.1 1384.3,676.3"/><polygon points="1442.0,696.5 1427.8,710.7 1407.6,710.7 1393.4,696.5 1393.4,676.3 1407.6,662.1 1427.8,662.1 1442.0,676.3"/><polygon points="1500.2,696.5 1486.0,710.7 1465.8,710.7 1451.6,696.5 1451.6,676.3 1465.8,662.1 1486.0,662.1 1500.2,676.3"/></g>
    <path fill="#555564" d="M1382 411 H1400 L1408 419 V435 L1399 443 V447 H1414 L1428 456 L1436.6 479 V508 L1426 510 L1420 482 V550 L1428 564 H1403.5 L1393 523 H1391 L1378.7 564 H1354 L1366 550 V482 L1358 510 L1344.5 508 V479 L1353 456 L1367 447 H1383 V443 L1374 435 V419 Z"/>
    <path fill="none" stroke="#4a4a58" stroke-width="3" d="M1280 573 Q1290 560 1300 575 H1372 Q1385 560 1410 575 H1482 Q1495 560 1502 573"/>
    <!-- action panel -->
    <rect x="1260" y="762" width="262" height="224" fill="#25232f"/>
    <g fill="#6b6b77" stroke="#7c7c88" stroke-width="1.5">
      <rect x="1266" y="769" width="121" height="62"/><rect x="1394.7" y="769" width="121" height="62"/>
      <rect x="1266" y="841" width="121" height="60.5"/><rect x="1394.7" y="841" width="121" height="60.5"/>
      <rect x="1266" y="911.6" width="121" height="67"/><rect x="1394.7" y="911.6" width="121" height="67"/>
    </g>
    <rect x="1300" y="778.5" width="62" height="44" fill="#6b6b77" stroke="#f2f2f2" stroke-width="3"/>
    <rect x="1428.4" y="778.5" width="62" height="44" fill="#6b6b77" stroke="#f2f2f2" stroke-width="3"/>
    <path d="M1311 801 Q1331 784 1351 801 Q1331 816 1311 801 Z" fill="none" stroke="#a8b0c0" stroke-width="2"/>
    <circle cx="1331" cy="800" r="5" fill="#8890a8"/>
    <path d="M1444 805 L1452 797 L1452 786 L1456 786 L1456 795 L1459 786 L1463 786 L1462 796 L1466 788 L1469 789 L1467 798 L1472 793 L1475 795 L1468 812 H1454 Z" fill="#c8d0cc"/>
    <!-- potions -->
    <rect x="446" y="756" width="76" height="75" fill="#1e1a2c" stroke="#f0f0f0" stroke-width="2.5"/>
    <path d="M446 790 L490 780 L522 770 V800 L490 812 L446 810 Z" fill="#3a262e"/>
    <circle cx="482" cy="803" r="17" fill="#c23a40"/><rect x="477" y="771" width="10" height="18" fill="#9aa0b8"/>
    <rect x="488.5" y="750" width="37" height="77" fill="none" stroke="#f6f6f6" stroke-width="3"/>
    <rect x="1116" y="750" width="82" height="81" fill="#1e1a2c" stroke="#f0f0f0" stroke-width="2.5"/>
    <path d="M1116 790 L1150 776 L1198 780 V810 L1150 815 L1116 810 Z" fill="#3a262e"/>
    <circle cx="1159" cy="803" r="17" fill="#3a72d8"/><rect x="1154" y="771" width="10" height="18" fill="#9aa0b8"/>
    <rect x="1115.5" y="749.5" width="48" height="78" fill="none" stroke="#f6f6f6" stroke-width="2.5"/>
    <path d="M1125 838 V872 M1162 838 V872" stroke="#fff" stroke-width="2.5"/>
    <!-- arrow buttons -->
    <rect x="743" y="793" width="155" height="38" fill="#f0f0f0"/>
    <g fill="#22202e"><rect x="747" y="797" width="33" height="31"/><rect x="784" y="797" width="33" height="31"/><rect x="822" y="797" width="33" height="31"/><rect x="860" y="797" width="33" height="31"/></g>
    <g fill="#e08848">
      <path d="M754 812 L764 803 V808 H773 V816 H764 V821 Z"/>
      <path d="M800 803 L809 812 H804 V821 H796 V812 H791 Z"/>
      <path d="M838 821 L847 812 H842 V803 H834 V812 H829 Z"/>
      <path d="M886 812 L876 803 V808 H867 V816 H876 V821 Z"/>
    </g>
    <!-- monster -->
    <path fill="#2a1418" d="M792 388 H852 L864 398 V424 L858 440 H786 L778 424 V398 Z"/>
    <rect x="727" y="407" width="51" height="8" fill="#2a1418"/><rect x="864" y="407" width="42" height="8" fill="#2a1418"/>
    <rect x="788" y="393" width="66" height="9" fill="#5c3c1e"/>
    <path fill="#7b8a3c" d="M789 400 H854 V406 L840 416 H826 V406 H818 V416 H804 L789 406 Z"/>
    <rect x="784" y="420" width="76" height="17" fill="#6a5028"/>
    <rect x="802" y="423" width="38" height="22" fill="#7b8a3c"/><rect x="807" y="444" width="30" height="8" fill="#7b8a3c"/>
    <rect x="812" y="428" width="5" height="5" fill="#1a1420"/><rect x="827" y="428" width="5" height="5" fill="#1a1420"/>
    <rect x="812" y="441" width="20" height="3" fill="#2a2030"/>
    <g fill="#a8b4cc"><rect x="788" y="430" width="5" height="30"/><rect x="848" y="430" width="5" height="30"/>
    <rect x="674" y="428" width="4" height="8"/><rect x="688" y="428" width="6" height="10"/><rect x="706" y="428" width="6" height="10"/>
    <rect x="964" y="428" width="4" height="8"/><rect x="948" y="428" width="6" height="10"/><rect x="930" y="428" width="6" height="10"/></g>
    <path fill="#5e4a22" d="M674 406 H726 V428 H712 V424 H694 V428 H678 Z M968 406 H916 V428 H930 V424 H948 V428 H964 Z"/>
    <g fill="#7b8a3c"><rect x="688" y="415" width="5" height="14"/><rect x="706" y="415" width="5" height="14"/><rect x="949" y="415" width="5" height="14"/><rect x="931" y="415" width="5" height="14"/></g>
    <rect x="708" y="400" width="20" height="5" fill="#1e1428"/><rect x="914" y="400" width="20" height="5" fill="#1e1428"/>
    <path fill="#4a3a1e" d="M448 406 H470 L478 412 V418 L460 420 L448 418 Z"/>
    <path fill="#7b8a3c" d="M462 414 H478 L484 422 H492 V430 L476 432 L466 424 Z"/>
    <rect x="478" y="428" width="18" height="4" fill="#5a4a22"/>
    <path fill="#5a4a22" d="M430 432 H440 V460 H432 L428 450 Z"/>
    <path fill="#7b8a3c" d="M434 436 H440 V458 H434 Z"/>
    <path fill="#7b8a3c" d="M1162 420 L1180 410 H1200 V428 L1182 432 L1166 432 Z"/><rect x="1180" y="408" width="20" height="6" fill="#6a5028"/><rect x="1204" y="430" width="7" height="32" fill="#6a5a28"/>
    <!-- vines -->
    <g fill="#3a6a42" stroke="#1e2a26" stroke-width="1.5">
      <path d="M1246 403 h6 v20 h3 v25 h-5 v23 h-6 v-20 h-3 v-25 h5 Z"/>
      <path d="M1532 365 h6 v25 h4 v30 h-5 v20 h-6 v-25 h-3 v-30 h4 Z"/>
      <path d="M1530 722 h8 v10 h4 v40 h-6 v25 h-6 v-30 h-4 v-25 h4 Z M1508 776 l14 -6 l4 6 l-14 8 Z"/>
      <path d="M1166 884 h5 v30 h5 v40 h-4 v40 h-6 v-40 h-4 v-40 h4 Z M1168 996 l10 -12 l6 4 l-8 10 Z M1190 994 l8 -10 l5 3 l-6 9 Z M1206 994 l8 -10 l5 3 l-6 9 Z"/>
    </g>
    <!-- purple sector lines -->
    <rect x="441.5" y="417.8" width="759" height="418.2" fill="none" stroke="#b07fca" stroke-width="3.5"/>
    <!-- selection boxes -->
    <g fill="none" stroke="#fff" stroke-width="3">
      <rect x="404.5" y="404.5" width="92" height="56"/>
      <rect x="668" y="385.5" width="306" height="77"/>
      <rect x="1158.5" y="404.5" width="52" height="55"/>
      <rect x="1211" y="398.5" width="27" height="76"/>
      <rect x="1239.5" y="456" width="37" height="38"/>
      <rect x="1258.5" y="395" width="266" height="341"/>
      <rect x="1495.5" y="361.5" width="47" height="76"/>
      <rect x="1505.5" y="721" width="36" height="78"/>
      <rect x="1258" y="759.8" width="265" height="228"/>
      <rect x="1164.5" y="874" width="64" height="127"/>
    </g>
    <!-- teal bounds -->
    <rect x="404" y="1006" width="758" height="2" fill="#f4f4f4"/>
    <rect x="402" y="363.5" width="1141.5" height="641" fill="none" stroke="#8ad6bf" stroke-width="3.5"/>
    <!-- vertices -->
    <g fill="#fff"><rect x="433" y="410" width="15.5" height="15.5"/><rect x="1193" y="410" width="15.5" height="15.5"/><rect x="433" y="828" width="15.5" height="15.5"/><rect x="1193" y="828" width="15.5" height="15.5"/></g>
  </svg>

  <!-- code editor -->
  <div class="a" style="left:214px;top:1056px;width:1124px;height:2px;background:#6a6a6a"></div><div class="a" style="left:214px;top:1058px;width:1122px;height:481px;background:#e6e6e6"></div>
  <div class="a" style="left:216px;top:1060px;width:44px;height:477px;background:#9a9a9a"></div>
  <div class="a" style="left:262px;top:1060px;width:1072px;height:477px;background:#272727"></div>

  <!-- action panel -->
  <div class="a" style="left:1336px;top:1056px;width:416px;height:483px;background:#6a6a6a"></div>
  <div class="a" style="left:1338px;top:1058px;width:413px;height:479px;background:#9a9a9a"></div>
  <div class="a" style="left:1340px;top:1060px;width:411px;height:475px;background:#505050"></div>
  <div class="a" style="left:1340px;top:1060px;width:411px;height:50px;background:#787878"></div>


  <!-- code editor content -->
  <div class="t" style="left:212px;width:36px;text-align:right;top:1061px;font-family:'Liberation Mono',monospace;font-size:27px;font-weight:bold;line-height:36px;color:#ececec">1</div><div class="t" style="left:212px;width:36px;text-align:right;top:1097px;font-family:'Liberation Mono',monospace;font-size:27px;font-weight:bold;line-height:36px;color:#ececec">2</div><div class="t" style="left:212px;width:36px;text-align:right;top:1133px;font-family:'Liberation Mono',monospace;font-size:27px;font-weight:bold;line-height:36px;color:#ececec">3</div><div class="t" style="left:212px;width:36px;text-align:right;top:1169px;font-family:'Liberation Mono',monospace;font-size:27px;font-weight:bold;line-height:36px;color:#ececec">4</div><div class="t" style="left:212px;width:36px;text-align:right;top:1205px;font-family:'Liberation Mono',monospace;font-size:27px;font-weight:bold;line-height:36px;color:#ececec">5</div><div class="t" style="left:212px;width:36px;text-align:right;top:1241px;font-family:'Liberation Mono',monospace;font-size:27px;font-weight:bold;line-height:36px;color:#ececec">6</div><div class="t" style="left:212px;width:36px;text-align:right;top:1277px;font-family:'Liberation Mono',monospace;font-size:27px;font-weight:bold;line-height:36px;color:#ececec">7</div><div class="t" style="left:212px;width:36px;text-align:right;top:1313px;font-family:'Liberation Mono',monospace;font-size:27px;font-weight:bold;line-height:36px;color:#ececec">8</div>
  <div class="t" style="left:273px;top:1061px;font-family:'Liberation Mono',monospace;font-size:29.5px;font-weight:bold;line-height:36px;color:#e8dcb0;white-space:pre">[ui]
<span style="color:#5b95d8">role</span> <span style="color:#d6c9a0">=</span> <span style="color:#d9a96a">"game"</span>
<span style="color:#5b95d8">upscale</span> <span style="color:#d6c9a0">=</span> <span style="color:#d68aac">1.5</span>

[camera]
<span style="color:#5b95d8">type</span> <span style="color:#d6c9a0">=</span> <span style="color:#d9a96a">"firstp"</span></div>
  <!-- action list -->
  <div class="t" style="left:1358px;top:1071px;font-size:25px;font-weight:bold;color:#f6f6f6">Automatic</div>
  <svg class="a" style="left:1490px;top:1072px" width="34" height="28"><rect x="2" y="3" width="24" height="23" rx="4" fill="none" stroke="#fff" stroke-width="3.5"/><path d="M7 13 L13 20 L29 3" fill="none" stroke="#fff" stroke-width="4"/></svg>
  <div class="a" style="left:1640px;top:1065px;width:101px;height:38px;border:2px solid #6c6c6c;border-radius:2px;background:#7a7a7a"></div>
  <div class="t" style="left:1654px;top:1071px;font-size:25px;font-weight:bold;color:#f6f6f6">Apply</div>
  <div class="a" style="left:1340px;top:1110px;width:411px;height:2.5px;background:#5c5c5c"></div><div class="a" style="left:1340px;top:1112.5px;width:411px;height:1.5px;background:#8a8a8a"></div>
  <div class="a" style="left:1340px;top:1114px;width:408px;height:34px;background:#c2ab98;border-radius:3px"></div><div class="t" style="left:1361px;top:1117.5px;font-size:26px;letter-spacing:0.5px;font-weight:bold;color:#555">Create Center Vertex</div><div class="a" style="left:1340px;top:1154px;width:408px;height:34px;background:#d3d3d3;border-radius:3px"></div><div class="t" style="left:1361px;top:1157.5px;font-size:26px;letter-spacing:0.5px;font-weight:bold;color:#555">Edit Sector</div><div class="a" style="left:1340px;top:1194px;width:408px;height:34px;background:#c2ab98;border-radius:3px"></div><div class="t" style="left:1361px;top:1197.5px;font-size:26px;letter-spacing:0.5px;font-weight:bold;color:#555">Editing Slice</div><div class="a" style="left:1340px;top:1234px;width:408px;height:34px;background:#c2ab98;border-radius:3px"></div><div class="t" style="left:1361px;top:1237.5px;font-size:26px;letter-spacing:0.5px;font-weight:bold;color:#555">Extrude Sector</div><div class="a" style="left:1340px;top:1274px;width:408px;height:34px;background:#c2ab98;border-radius:3px"></div><div class="t" style="left:1361px;top:1277.5px;font-size:26px;letter-spacing:0.5px;font-weight:bold;color:#555">Toggle Rect Geometry</div><div class="a" style="left:1340px;top:1314px;width:408px;height:34px;background:#c8c49c;border-radius:3px"></div><div class="t" style="left:1361px;top:1317.5px;font-size:26px;letter-spacing:0.5px;font-weight:bold;color:#555">Clear Tile</div><div class="a" style="left:1340px;top:1354px;width:408px;height:34px;background:#c8c49c;border-radius:3px"></div><div class="t" style="left:1361px;top:1357.5px;font-size:26px;letter-spacing:0.5px;font-weight:bold;color:#555">Edit / Maximize</div>

  <div class="a" style="left:112px;top:1537.5px;width:1640px;height:1.5px;background:#5a5a5a"></div>
  <!-- status bar -->
  <div class="a" style="left:112px;top:1539px;width:1640px;height:41px;background:linear-gradient(#8a8a8a,#777)"></div>

  <!-- right panel -->
  <div class="a" style="left:1752px;top:270px;width:760px;height:1050px;background:#505050"></div>
  <div class="a" style="left:2486px;top:270px;width:26px;height:1050px;background:#8a8a8a"></div>
  <div class="a" style="left:1752px;top:270px;width:730px;height:36px;background:linear-gradient(#8c8c8c,#6c6c6c)"></div>
  <div class="a" style="left:1752px;top:1001px;width:760px;height:54px;background:#777"></div>
  <div class="a" style="left:1752px;top:1320px;width:760px;height:260px;background:#282828"></div>

  <!-- right panel content -->
  <div class="a" style="left:1752px;top:270px;width:2px;height:1050px;background:#9a9a9a"></div>
  <div class="a" style="left:2482px;top:272px;width:4px;height:729px;background:#4a4a4a"></div>
  <svg class="a" style="left:1764px;top:282px" width="21" height="11"><path d="M0 0 H21 L10.5 11 Z" fill="#fff"/></svg>
  <div class="t" style="left:1813px;top:275.5px;font-size:27px;font-weight:bold;color:#f4f4f4">Screens</div>
  <div class="a" style="left:1752px;top:306px;width:730px;height:6px;background:#4a4a4a"></div>
  <div style="position:absolute;left:1752px;top:312px;width:730px;height:689px;overflow:hidden">
    <div class="a" style="left:40px;top:2px;width:690px;height:42px;background:#b07fca;border-radius:3px 0 0 3px"></div>
    <svg class="a" style="left:52px;top:18px" width="21" height="11"><path d="M0 0 H21 L10.5 11 Z" fill="#fff"/></svg>
    <div class="t" style="left:101px;top:11.6px;font-size:26px;font-weight:bold;color:#f6f0f8">Dungeon</div>
    <div class="a" style="left:80px;top:50px;width:648px;height:44px;background:#adadad;border-radius:3px"></div><div class="a" style="left:318px;top:50px;width:2px;height:44px;background:#505050"></div><div class="t" style="left:101px;top:58.6px;font-size:26px;font-weight:bold;color:#4e4e4e">Name</div><div class="a" style="left:336px;top:56px;width:380px;height:32px;background:#969696"></div><div class="t" style="left:347px;top:56.6px;font-size:26px;font-weight:bold;color:#f4f4f4">Dungeon</div><div class="a" style="left:80px;top:98px;width:648px;height:44px;background:#b07fca;border-radius:3px"></div><div class="a" style="left:318px;top:98px;width:2px;height:44px;background:#505050"></div><div class="t" style="left:101px;top:106.6px;font-size:26px;font-weight:bold;color:#4e4e4e">Game</div><div class="t" style="left:337px;top:106.6px;font-size:26px;font-weight:bold;color:#4e4e4e">Widget</div><div class="a" style="left:80px;top:146px;width:648px;height:44px;background:#c8c49c;border-radius:3px"></div><div class="a" style="left:318px;top:146px;width:2px;height:44px;background:#505050"></div><div class="t" style="left:101px;top:154.6px;font-size:26px;font-weight:bold;color:#4e4e4e">Unnamed</div><div class="t" style="left:337px;top:154.6px;font-size:26px;font-weight:bold;color:#4e4e4e">Widget</div><div class="a" style="left:80px;top:194px;width:648px;height:44px;background:#c8c49c;border-radius:3px"></div><div class="a" style="left:318px;top:194px;width:2px;height:44px;background:#505050"></div><div class="t" style="left:101px;top:202.6px;font-size:26px;font-weight:bold;color:#4e4e4e">Unnamed</div><div class="t" style="left:337px;top:202.6px;font-size:26px;font-weight:bold;color:#4e4e4e">Widget</div><div class="a" style="left:80px;top:242px;width:648px;height:44px;background:#c8c49c;border-radius:3px"></div><div class="a" style="left:318px;top:242px;width:2px;height:44px;background:#505050"></div><div class="t" style="left:101px;top:250.6px;font-size:26px;font-weight:bold;color:#4e4e4e">Unnamed</div><div class="t" style="left:337px;top:250.6px;font-size:26px;font-weight:bold;color:#4e4e4e">Widget</div><div class="a" style="left:80px;top:290px;width:648px;height:44px;background:#c8c49c;border-radius:3px"></div><div class="a" style="left:318px;top:290px;width:2px;height:44px;background:#505050"></div><div class="t" style="left:101px;top:298.6px;font-size:26px;font-weight:bold;color:#4e4e4e">Unnamed</div><div class="t" style="left:337px;top:298.6px;font-size:26px;font-weight:bold;color:#4e4e4e">Widget</div><div class="a" style="left:80px;top:338px;width:648px;height:44px;background:#c8c49c;border-radius:3px"></div><div class="a" style="left:318px;top:338px;width:2px;height:44px;background:#505050"></div><div class="t" style="left:101px;top:346.6px;font-size:26px;font-weight:bold;color:#4e4e4e">Unnamed</div><div class="t" style="left:337px;top:346.6px;font-size:26px;font-weight:bold;color:#4e4e4e">Widget</div><div class="a" style="left:80px;top:386px;width:648px;height:44px;background:#c8c49c;border-radius:3px"></div><div class="a" style="left:318px;top:386px;width:2px;height:44px;background:#505050"></div><div class="t" style="left:101px;top:394.6px;font-size:26px;font-weight:bold;color:#4e4e4e">Messages</div><div class="t" style="left:337px;top:394.6px;font-size:26px;font-weight:bold;color:#4e4e4e">Widget</div><div class="a" style="left:80px;top:434px;width:648px;height:44px;background:#c8c49c;border-radius:3px"></div><div class="a" style="left:318px;top:434px;width:2px;height:44px;background:#505050"></div><div class="t" style="left:101px;top:442.6px;font-size:26px;font-weight:bold;color:#4e4e4e">Unnamed</div><div class="t" style="left:337px;top:442.6px;font-size:26px;font-weight:bold;color:#4e4e4e">Widget</div><div class="a" style="left:80px;top:482px;width:648px;height:44px;background:#c8c49c;border-radius:3px"></div><div class="a" style="left:318px;top:482px;width:2px;height:44px;background:#505050"></div><div class="t" style="left:101px;top:490.6px;font-size:26px;font-weight:bold;color:#4e4e4e">Health</div><div class="t" style="left:337px;top:490.6px;font-size:26px;font-weight:bold;color:#4e4e4e">Widget</div><div class="a" style="left:80px;top:530px;width:648px;height:44px;background:#c8c49c;border-radius:3px"></div><div class="a" style="left:318px;top:530px;width:2px;height:44px;background:#505050"></div><div class="t" style="left:101px;top:538.6px;font-size:26px;font-weight:bold;color:#4e4e4e">HealthDeco</div><div class="t" style="left:337px;top:538.6px;font-size:26px;font-weight:bold;color:#4e4e4e">Widget</div><div class="a" style="left:80px;top:578px;width:648px;height:44px;background:#c8c49c;border-radius:3px"></div><div class="a" style="left:318px;top:578px;width:2px;height:44px;background:#505050"></div><div class="t" style="left:101px;top:586.6px;font-size:26px;font-weight:bold;color:#4e4e4e">Left</div><div class="t" style="left:337px;top:586.6px;font-size:26px;font-weight:bold;color:#4e4e4e">Widget</div><div class="a" style="left:80px;top:626px;width:648px;height:44px;background:#c8c49c;border-radius:3px"></div><div class="a" style="left:318px;top:626px;width:2px;height:44px;background:#505050"></div><div class="t" style="left:101px;top:634.6px;font-size:26px;font-weight:bold;color:#4e4e4e">Forward</div><div class="t" style="left:337px;top:634.6px;font-size:26px;font-weight:bold;color:#4e4e4e">Widget</div><div class="a" style="left:80px;top:674px;width:648px;height:44px;background:#c8c49c;border-radius:3px"></div><div class="a" style="left:318px;top:674px;width:2px;height:44px;background:#505050"></div><div class="t" style="left:101px;top:682.6px;font-size:26px;font-weight:bold;color:#4e4e4e">Backward</div><div class="t" style="left:337px;top:682.6px;font-size:26px;font-weight:bold;color:#4e4e4e">Widget</div>
  </div>
  <div class="a" style="left:2487px;top:358px;width:21px;height:322px;border-radius:10px;background:linear-gradient(90deg,#d8d8d8,#b8b8b8)"></div>

  <div class="a" style="left:1752px;top:1001px;width:760px;height:3px;background:#8c8c8c"></div>
  <div class="a" style="left:1763px;top:1009px;width:38px;height:38px;border:1.5px solid #6a6a6a;border-radius:3px;background:#7a7a7a"></div>
  <div class="a" style="left:1813px;top:1009px;width:38px;height:38px;border:1.5px solid #6a6a6a;border-radius:3px;background:#7a7a7a"></div>
  <svg class="a" style="left:1763px;top:1009px" width="90" height="38"><path d="M19 9 V29 M9 19 H29" stroke="#fff" stroke-width="4"/><path d="M59 19 H79" stroke="#fff" stroke-width="4"/></svg>
  <div class="a" style="left:1878px;top:1009px;width:2px;height:38px;background:#6a6a6a"></div>
  <div class="t" style="left:1905px;top:1016px;font-size:26.5px;font-weight:bold;color:#f4f4f4">Screen (Dungeon) Widget</div>
  <div class="a" style="left:2413px;top:1009px;width:38px;height:38px;border:1.5px solid #6a6a6a;border-radius:3px;background:#7a7a7a"></div>
  <div class="a" style="left:2463px;top:1009px;width:38px;height:38px;border:1.5px solid #6a6a6a;border-radius:3px;background:#7a7a7a"></div>
  <svg class="a" style="left:2413px;top:1009px" width="90" height="38">
    <g fill="none" stroke="#fff" stroke-width="3"><path d="M19 6 V23 M12 16 L19 23 L26 16 M8 20 V30 H30 V20"/><path d="M69 26 V8 M62 15 L69 8 L76 15 M58 18 V31 H80 V18"/></g>
  </svg>
  <div class="a" style="left:1752px;top:1055px;width:760px;height:5px;background:#5a5a5a"></div>
  <!-- edit sector -->
  <div style="position:absolute;left:1752px;top:1060px;width:730px;height:257px;overflow:hidden;background:#505050">
    <div class="a" style="left:0px;top:1px;width:730px;height:44px;background:#adadad"></div>
    <svg class="a" style="left:12px;top:19px" width="21" height="11"><path d="M0 0 H21 L10.5 11 Z" fill="#fff"/></svg>
    <div class="t" style="left:61px;top:10px;font-size:27px;font-weight:bold;color:#f4f4f4">Edit Sector</div>
    <div class="a" style="left:40px;top:50px;width:688px;height:44px;background:#adadad;border-radius:3px"></div><div class="a" style="left:318px;top:50px;width:2px;height:44px;background:#505050"></div><div class="t" style="left:61px;top:58.6px;font-size:26px;font-weight:bold;color:#4e4e4e">Sector Name</div><div class="a" style="left:336px;top:56px;width:380px;height:32px;background:#969696"></div><div class="t" style="left:347px;top:56.6px;font-size:26px;font-weight:bold;color:#f4f4f4">Game</div><div class="a" style="left:40px;top:98px;width:688px;height:44px;background:#adadad;border-radius:3px"></div><div class="a" style="left:318px;top:98px;width:2px;height:44px;background:#505050"></div><div class="t" style="left:61px;top:106.6px;font-size:26px;font-weight:bold;color:#4e4e4e">Item Name</div><div class="a" style="left:336px;top:104px;width:380px;height:32px;background:#969696"></div><div class="a" style="left:40px;top:146px;width:688px;height:44px;background:#adadad;border-radius:3px"></div><div class="a" style="left:318px;top:146px;width:2px;height:44px;background:#505050"></div><div class="t" style="left:61px;top:154.6px;font-size:26px;font-weight:bold;color:#4e4e4e">Visible</div><svg class="a" style="left:336px;top:156px" width="34" height="28"><rect x="2" y="3" width="24" height="23" rx="4" fill="none" stroke="#fff" stroke-width="3.5"/><path d="M7 13 L13 20 L29 3" fill="none" stroke="#fff" stroke-width="4"/><path d="M8 14 L13 19 L26 6" fill="none" stroke="#555" stroke-width="1.5"/></svg>
    <div class="a" style="left:40px;top:194px;width:690px;height:43px;background:#adadad;border-radius:3px"></div>
    <svg class="a" style="left:52px;top:210px" width="21" height="11"><path d="M0 0 H21 L10.5 11 Z" fill="#fff"/></svg>
    <div class="t" style="left:101px;top:202px;font-size:26px;font-weight:bold;color:#f4f4f4">Terrain</div>
    <div class="a" style="left:81px;top:242px;width:647px;height:44px;background:#adadad;border-radius:3px"></div>
    <div class="a" style="left:318px;top:242px;width:2px;height:44px;background:#505050"></div>
    <div class="a" style="left:341px;top:248px;width:280px;height:30px;background:#868686"></div>
  </div>
  <div class="a" style="left:2487px;top:1061px;width:21px;height:148px;border-radius:10px;background:linear-gradient(90deg,#d8d8d8,#b8b8b8)"></div>
  <div class="a" style="left:1752px;top:1317px;width:760px;height:3px;background:#8a8a8a"></div>
  <svg class="a" style="left:1752px;top:1320px" width="760" height="260" viewBox="1752 1320 760 260">
    <defs><pattern id="tan" x="1760" y="1405" width="48" height="48" patternUnits="userSpaceOnUse"><rect width="48" height="48" fill="#8c8270"/><rect x="0" y="0" width="2" height="2" fill="#aaa086"/><rect x="2" y="0" width="2" height="2" fill="#aaa086"/><rect x="4" y="0" width="2" height="2" fill="#aaa086"/><rect x="6" y="0" width="2" height="2" fill="#ddd0ae"/><rect x="8" y="0" width="2" height="2" fill="#aaa086"/><rect x="10" y="0" width="2" height="2" fill="#2c2830"/><rect x="14" y="0" width="2" height="2" fill="#4c4650"/><rect x="16" y="0" width="2" height="2" fill="#ddd0ae"/><rect x="18" y="0" width="2" height="2" fill="#aaa086"/><rect x="20" y="0" width="2" height="2" fill="#2c2830"/><rect x="24" y="0" width="2" height="2" fill="#4c4650"/><rect x="26" y="0" width="2" height="2" fill="#c8bc9c"/><rect x="28" y="0" width="2" height="2" fill="#4c4650"/><rect x="30" y="0" width="2" height="2" fill="#4c4650"/><rect x="36" y="0" width="2" height="2" fill="#c8bc9c"/><rect x="38" y="0" width="2" height="2" fill="#2c2830"/><rect x="40" y="0" width="2" height="2" fill="#aaa086"/><rect x="44" y="0" width="2" height="2" fill="#aaa086"/><rect x="0" y="2" width="2" height="2" fill="#aaa086"/><rect x="6" y="2" width="2" height="2" fill="#2c2830"/><rect x="12" y="2" width="2" height="2" fill="#ddd0ae"/><rect x="14" y="2" width="2" height="2" fill="#2c2830"/><rect x="16" y="2" width="2" height="2" fill="#c8bc9c"/><rect x="18" y="2" width="2" height="2" fill="#ddd0ae"/><rect x="20" y="2" width="2" height="2" fill="#4c4650"/><rect x="22" y="2" width="2" height="2" fill="#aaa086"/><rect x="26" y="2" width="2" height="2" fill="#ddd0ae"/><rect x="28" y="2" width="2" height="2" fill="#aaa086"/><rect x="30" y="2" width="2" height="2" fill="#ddd0ae"/><rect x="32" y="2" width="2" height="2" fill="#2c2830"/><rect x="34" y="2" width="2" height="2" fill="#c8bc9c"/><rect x="36" y="2" width="2" height="2" fill="#c8bc9c"/><rect x="44" y="2" width="2" height="2" fill="#c8bc9c"/><rect x="46" y="2" width="2" height="2" fill="#4c4650"/><rect x="2" y="4" width="2" height="2" fill="#aaa086"/><rect x="4" y="4" width="2" height="2" fill="#c8bc9c"/><rect x="6" y="4" width="2" height="2" fill="#c8bc9c"/><rect x="8" y="4" width="2" height="2" fill="#aaa086"/><rect x="10" y="4" width="2" height="2" fill="#4c4650"/><rect x="12" y="4" width="2" height="2" fill="#c8bc9c"/><rect x="14" y="4" width="2" height="2" fill="#4c4650"/><rect x="16" y="4" width="2" height="2" fill="#aaa086"/><rect x="20" y="4" width="2" height="2" fill="#ddd0ae"/><rect x="24" y="4" width="2" height="2" fill="#aaa086"/><rect x="26" y="4" width="2" height="2" fill="#aaa086"/><rect x="30" y="4" width="2" height="2" fill="#aaa086"/><rect x="32" y="4" width="2" height="2" fill="#c8bc9c"/><rect x="34" y="4" width="2" height="2" fill="#4c4650"/><rect x="42" y="4" width="2" height="2" fill="#ddd0ae"/><rect x="46" y="4" width="2" height="2" fill="#aaa086"/><rect x="0" y="6" width="2" height="2" fill="#ddd0ae"/><rect x="2" y="6" width="2" height="2" fill="#ddd0ae"/><rect x="4" y="6" width="2" height="2" fill="#c8bc9c"/><rect x="6" y="6" width="2" height="2" fill="#c8bc9c"/><rect x="8" y="6" width="2" height="2" fill="#4c4650"/><rect x="10" y="6" width="2" height="2" fill="#aaa086"/><rect x="14" y="6" width="2" height="2" fill="#aaa086"/><rect x="16" y="6" width="2" height="2" fill="#aaa086"/><rect x="18" y="6" width="2" height="2" fill="#2c2830"/><rect x="22" y="6" width="2" height="2" fill="#ddd0ae"/><rect x="26" y="6" width="2" height="2" fill="#c8bc9c"/><rect x="28" y="6" width="2" height="2" fill="#4c4650"/><rect x="30" y="6" width="2" height="2" fill="#2c2830"/><rect x="32" y="6" width="2" height="2" fill="#c8bc9c"/><rect x="34" y="6" width="2" height="2" fill="#ddd0ae"/><rect x="36" y="6" width="2" height="2" fill="#4c4650"/><rect x="38" y="6" width="2" height="2" fill="#c8bc9c"/><rect x="40" y="6" width="2" height="2" fill="#c8bc9c"/><rect x="0" y="8" width="2" height="2" fill="#aaa086"/><rect x="2" y="8" width="2" height="2" fill="#ddd0ae"/><rect x="8" y="8" width="2" height="2" fill="#ddd0ae"/><rect x="10" y="8" width="2" height="2" fill="#4c4650"/><rect x="12" y="8" width="2" height="2" fill="#c8bc9c"/><rect x="14" y="8" width="2" height="2" fill="#c8bc9c"/><rect x="16" y="8" width="2" height="2" fill="#4c4650"/><rect x="18" y="8" width="2" height="2" fill="#aaa086"/><rect x="20" y="8" width="2" height="2" fill="#c8bc9c"/><rect x="22" y="8" width="2" height="2" fill="#c8bc9c"/><rect x="26" y="8" width="2" height="2" fill="#2c2830"/><rect x="30" y="8" width="2" height="2" fill="#4c4650"/><rect x="32" y="8" width="2" height="2" fill="#aaa086"/><rect x="36" y="8" width="2" height="2" fill="#aaa086"/><rect x="38" y="8" width="2" height="2" fill="#ddd0ae"/><rect x="40" y="8" width="2" height="2" fill="#aaa086"/><rect x="42" y="8" width="2" height="2" fill="#aaa086"/><rect x="46" y="8" width="2" height="2" fill="#c8bc9c"/><rect x="2" y="10" width="2" height="2" fill="#aaa086"/><rect x="4" y="10" width="2" height="2" fill="#c8bc9c"/><rect x="6" y="10" width="2" height="2" fill="#c8bc9c"/><rect x="8" y="10" width="2" height="2" fill="#ddd0ae"/><rect x="10" y="10" width="2" height="2" fill="#2c2830"/><rect x="12" y="10" width="2" height="2" fill="#ddd0ae"/><rect x="14" y="10" width="2" height="2" fill="#c8bc9c"/><rect x="16" y="10" width="2" height="2" fill="#4c4650"/><rect x="18" y="10" width="2" height="2" fill="#aaa086"/><rect x="20" y="10" width="2" height="2" fill="#4c4650"/><rect x="22" y="10" width="2" height="2" fill="#c8bc9c"/><rect x="24" y="10" width="2" height="2" fill="#c8bc9c"/><rect x="28" y="10" width="2" height="2" fill="#c8bc9c"/><rect x="30" y="10" width="2" height="2" fill="#ddd0ae"/><rect x="32" y="10" width="2" height="2" fill="#ddd0ae"/><rect x="34" y="10" width="2" height="2" fill="#aaa086"/><rect x="36" y="10" width="2" height="2" fill="#4c4650"/><rect x="38" y="10" width="2" height="2" fill="#c8bc9c"/><rect x="42" y="10" width="2" height="2" fill="#c8bc9c"/><rect x="44" y="10" width="2" height="2" fill="#aaa086"/><rect x="46" y="10" width="2" height="2" fill="#2c2830"/><rect x="0" y="12" width="2" height="2" fill="#c8bc9c"/><rect x="2" y="12" width="2" height="2" fill="#aaa086"/><rect x="4" y="12" width="2" height="2" fill="#aaa086"/><rect x="6" y="12" width="2" height="2" fill="#aaa086"/><rect x="8" y="12" width="2" height="2" fill="#aaa086"/><rect x="10" y="12" width="2" height="2" fill="#aaa086"/><rect x="12" y="12" width="2" height="2" fill="#c8bc9c"/><rect x="14" y="12" width="2" height="2" fill="#aaa086"/><rect x="16" y="12" width="2" height="2" fill="#c8bc9c"/><rect x="18" y="12" width="2" height="2" fill="#4c4650"/><rect x="20" y="12" width="2" height="2" fill="#aaa086"/><rect x="22" y="12" width="2" height="2" fill="#aaa086"/><rect x="24" y="12" width="2" height="2" fill="#c8bc9c"/><rect x="26" y="12" width="2" height="2" fill="#ddd0ae"/><rect x="28" y="12" width="2" height="2" fill="#aaa086"/><rect x="30" y="12" width="2" height="2" fill="#4c4650"/><rect x="34" y="12" width="2" height="2" fill="#4c4650"/><rect x="36" y="12" width="2" height="2" fill="#c8bc9c"/><rect x="38" y="12" width="2" height="2" fill="#aaa086"/><rect x="40" y="12" width="2" height="2" fill="#4c4650"/><rect x="42" y="12" width="2" height="2" fill="#aaa086"/><rect x="44" y="12" width="2" height="2" fill="#aaa086"/><rect x="46" y="12" width="2" height="2" fill="#aaa086"/><rect x="0" y="14" width="2" height="2" fill="#c8bc9c"/><rect x="2" y="14" width="2" height="2" fill="#aaa086"/><rect x="4" y="14" width="2" height="2" fill="#aaa086"/><rect x="6" y="14" width="2" height="2" fill="#aaa086"/><rect x="8" y="14" width="2" height="2" fill="#c8bc9c"/><rect x="10" y="14" width="2" height="2" fill="#aaa086"/><rect x="12" y="14" width="2" height="2" fill="#2c2830"/><rect x="14" y="14" width="2" height="2" fill="#aaa086"/><rect x="16" y="14" width="2" height="2" fill="#ddd0ae"/><rect x="18" y="14" width="2" height="2" fill="#ddd0ae"/><rect x="20" y="14" width="2" height="2" fill="#4c4650"/><rect x="22" y="14" width="2" height="2" fill="#4c4650"/><rect x="26" y="14" width="2" height="2" fill="#aaa086"/><rect x="28" y="14" width="2" height="2" fill="#ddd0ae"/><rect x="30" y="14" width="2" height="2" fill="#4c4650"/><rect x="32" y="14" width="2" height="2" fill="#aaa086"/><rect x="34" y="14" width="2" height="2" fill="#aaa086"/><rect x="36" y="14" width="2" height="2" fill="#aaa086"/><rect x="40" y="14" width="2" height="2" fill="#aaa086"/><rect x="42" y="14" width="2" height="2" fill="#4c4650"/><rect x="44" y="14" width="2" height="2" fill="#aaa086"/><rect x="46" y="14" width="2" height="2" fill="#c8bc9c"/><rect x="0" y="16" width="2" height="2" fill="#aaa086"/><rect x="2" y="16" width="2" height="2" fill="#aaa086"/><rect x="4" y="16" width="2" height="2" fill="#aaa086"/><rect x="6" y="16" width="2" height="2" fill="#aaa086"/><rect x="12" y="16" width="2" height="2" fill="#c8bc9c"/><rect x="14" y="16" width="2" height="2" fill="#aaa086"/><rect x="18" y="16" width="2" height="2" fill="#aaa086"/><rect x="20" y="16" width="2" height="2" fill="#aaa086"/><rect x="24" y="16" width="2" height="2" fill="#4c4650"/><rect x="32" y="16" width="2" height="2" fill="#c8bc9c"/><rect x="40" y="16" width="2" height="2" fill="#4c4650"/><rect x="42" y="16" width="2" height="2" fill="#c8bc9c"/><rect x="44" y="16" width="2" height="2" fill="#4c4650"/><rect x="46" y="16" width="2" height="2" fill="#4c4650"/><rect x="0" y="18" width="2" height="2" fill="#c8bc9c"/><rect x="2" y="18" width="2" height="2" fill="#2c2830"/><rect x="6" y="18" width="2" height="2" fill="#c8bc9c"/><rect x="8" y="18" width="2" height="2" fill="#c8bc9c"/><rect x="10" y="18" width="2" height="2" fill="#c8bc9c"/><rect x="14" y="18" width="2" height="2" fill="#aaa086"/><rect x="16" y="18" width="2" height="2" fill="#c8bc9c"/><rect x="20" y="18" width="2" height="2" fill="#4c4650"/><rect x="24" y="18" width="2" height="2" fill="#4c4650"/><rect x="26" y="18" width="2" height="2" fill="#c8bc9c"/><rect x="28" y="18" width="2" height="2" fill="#4c4650"/><rect x="30" y="18" width="2" height="2" fill="#ddd0ae"/><rect x="32" y="18" width="2" height="2" fill="#aaa086"/><rect x="34" y="18" width="2" height="2" fill="#c8bc9c"/><rect x="36" y="18" width="2" height="2" fill="#aaa086"/><rect x="38" y="18" width="2" height="2" fill="#aaa086"/><rect x="40" y="18" width="2" height="2" fill="#c8bc9c"/><rect x="44" y="18" width="2" height="2" fill="#4c4650"/><rect x="46" y="18" width="2" height="2" fill="#4c4650"/><rect x="0" y="20" width="2" height="2" fill="#ddd0ae"/><rect x="2" y="20" width="2" height="2" fill="#ddd0ae"/><rect x="4" y="20" width="2" height="2" fill="#4c4650"/><rect x="6" y="20" width="2" height="2" fill="#c8bc9c"/><rect x="8" y="20" width="2" height="2" fill="#2c2830"/><rect x="14" y="20" width="2" height="2" fill="#4c4650"/><rect x="16" y="20" width="2" height="2" fill="#4c4650"/><rect x="20" y="20" width="2" height="2" fill="#aaa086"/><rect x="22" y="20" width="2" height="2" fill="#2c2830"/><rect x="24" y="20" width="2" height="2" fill="#c8bc9c"/><rect x="26" y="20" width="2" height="2" fill="#c8bc9c"/><rect x="30" y="20" width="2" height="2" fill="#c8bc9c"/><rect x="32" y="20" width="2" height="2" fill="#ddd0ae"/><rect x="34" y="20" width="2" height="2" fill="#c8bc9c"/><rect x="36" y="20" width="2" height="2" fill="#ddd0ae"/><rect x="38" y="20" width="2" height="2" fill="#2c2830"/><rect x="40" y="20" width="2" height="2" fill="#4c4650"/><rect x="42" y="20" width="2" height="2" fill="#c8bc9c"/><rect x="44" y="20" width="2" height="2" fill="#ddd0ae"/><rect x="46" y="20" width="2" height="2" fill="#4c4650"/><rect x="0" y="22" width="2" height="2" fill="#c8bc9c"/><rect x="2" y="22" width="2" height="2" fill="#c8bc9c"/><rect x="4" y="22" width="2" height="2" fill="#ddd0ae"/><rect x="6" y="22" width="2" height="2" fill="#4c4650"/><rect x="8" y="22" width="2" height="2" fill="#c8bc9c"/><rect x="10" y="22" width="2" height="2" fill="#4c4650"/><rect x="14" y="22" width="2" height="2" fill="#aaa086"/><rect x="16" y="22" width="2" height="2" fill="#c8bc9c"/><rect x="18" y="22" width="2" height="2" fill="#c8bc9c"/><rect x="20" y="22" width="2" height="2" fill="#aaa086"/><rect x="22" y="22" width="2" height="2" fill="#aaa086"/><rect x="26" y="22" width="2" height="2" fill="#4c4650"/><rect x="28" y="22" width="2" height="2" fill="#c8bc9c"/><rect x="30" y="22" width="2" height="2" fill="#ddd0ae"/><rect x="32" y="22" width="2" height="2" fill="#aaa086"/><rect x="34" y="22" width="2" height="2" fill="#c8bc9c"/><rect x="36" y="22" width="2" height="2" fill="#c8bc9c"/><rect x="40" y="22" width="2" height="2" fill="#ddd0ae"/><rect x="42" y="22" width="2" height="2" fill="#c8bc9c"/><rect x="44" y="22" width="2" height="2" fill="#4c4650"/><rect x="46" y="22" width="2" height="2" fill="#4c4650"/><rect x="0" y="24" width="2" height="2" fill="#aaa086"/><rect x="2" y="24" width="2" height="2" fill="#4c4650"/><rect x="4" y="24" width="2" height="2" fill="#aaa086"/><rect x="8" y="24" width="2" height="2" fill="#aaa086"/><rect x="10" y="24" width="2" height="2" fill="#c8bc9c"/><rect x="12" y="24" width="2" height="2" fill="#4c4650"/><rect x="14" y="24" width="2" height="2" fill="#c8bc9c"/><rect x="16" y="24" width="2" height="2" fill="#c8bc9c"/><rect x="18" y="24" width="2" height="2" fill="#4c4650"/><rect x="20" y="24" width="2" height="2" fill="#4c4650"/><rect x="22" y="24" width="2" height="2" fill="#c8bc9c"/><rect x="24" y="24" width="2" height="2" fill="#aaa086"/><rect x="26" y="24" width="2" height="2" fill="#4c4650"/><rect x="30" y="24" width="2" height="2" fill="#c8bc9c"/><rect x="32" y="24" width="2" height="2" fill="#c8bc9c"/><rect x="34" y="24" width="2" height="2" fill="#2c2830"/><rect x="36" y="24" width="2" height="2" fill="#2c2830"/><rect x="38" y="24" width="2" height="2" fill="#4c4650"/><rect x="42" y="24" width="2" height="2" fill="#aaa086"/><rect x="44" y="24" width="2" height="2" fill="#c8bc9c"/><rect x="46" y="24" width="2" height="2" fill="#4c4650"/><rect x="0" y="26" width="2" height="2" fill="#aaa086"/><rect x="2" y="26" width="2" height="2" fill="#aaa086"/><rect x="4" y="26" width="2" height="2" fill="#4c4650"/><rect x="6" y="26" width="2" height="2" fill="#2c2830"/><rect x="8" y="26" width="2" height="2" fill="#c8bc9c"/><rect x="10" y="26" width="2" height="2" fill="#c8bc9c"/><rect x="12" y="26" width="2" height="2" fill="#2c2830"/><rect x="16" y="26" width="2" height="2" fill="#c8bc9c"/><rect x="18" y="26" width="2" height="2" fill="#aaa086"/><rect x="22" y="26" width="2" height="2" fill="#aaa086"/><rect x="24" y="26" width="2" height="2" fill="#aaa086"/><rect x="26" y="26" width="2" height="2" fill="#c8bc9c"/><rect x="28" y="26" width="2" height="2" fill="#c8bc9c"/><rect x="30" y="26" width="2" height="2" fill="#aaa086"/><rect x="32" y="26" width="2" height="2" fill="#2c2830"/><rect x="36" y="26" width="2" height="2" fill="#4c4650"/><rect x="38" y="26" width="2" height="2" fill="#4c4650"/><rect x="40" y="26" width="2" height="2" fill="#4c4650"/><rect x="42" y="26" width="2" height="2" fill="#c8bc9c"/><rect x="46" y="26" width="2" height="2" fill="#4c4650"/><rect x="0" y="28" width="2" height="2" fill="#aaa086"/><rect x="6" y="28" width="2" height="2" fill="#aaa086"/><rect x="8" y="28" width="2" height="2" fill="#aaa086"/><rect x="10" y="28" width="2" height="2" fill="#aaa086"/><rect x="14" y="28" width="2" height="2" fill="#aaa086"/><rect x="16" y="28" width="2" height="2" fill="#ddd0ae"/><rect x="18" y="28" width="2" height="2" fill="#ddd0ae"/><rect x="20" y="28" width="2" height="2" fill="#aaa086"/><rect x="24" y="28" width="2" height="2" fill="#aaa086"/><rect x="28" y="28" width="2" height="2" fill="#aaa086"/><rect x="30" y="28" width="2" height="2" fill="#ddd0ae"/><rect x="32" y="28" width="2" height="2" fill="#aaa086"/><rect x="36" y="28" width="2" height="2" fill="#c8bc9c"/><rect x="38" y="28" width="2" height="2" fill="#2c2830"/><rect x="42" y="28" width="2" height="2" fill="#4c4650"/><rect x="44" y="28" width="2" height="2" fill="#c8bc9c"/><rect x="0" y="30" width="2" height="2" fill="#aaa086"/><rect x="6" y="30" width="2" height="2" fill="#c8bc9c"/><rect x="12" y="30" width="2" height="2" fill="#4c4650"/><rect x="14" y="30" width="2" height="2" fill="#aaa086"/><rect x="16" y="30" width="2" height="2" fill="#2c2830"/><rect x="20" y="30" width="2" height="2" fill="#c8bc9c"/><rect x="22" y="30" width="2" height="2" fill="#c8bc9c"/><rect x="24" y="30" width="2" height="2" fill="#4c4650"/><rect x="26" y="30" width="2" height="2" fill="#4c4650"/><rect x="28" y="30" width="2" height="2" fill="#ddd0ae"/><rect x="30" y="30" width="2" height="2" fill="#c8bc9c"/><rect x="34" y="30" width="2" height="2" fill="#aaa086"/><rect x="38" y="30" width="2" height="2" fill="#aaa086"/><rect x="40" y="30" width="2" height="2" fill="#4c4650"/><rect x="42" y="30" width="2" height="2" fill="#2c2830"/><rect x="44" y="30" width="2" height="2" fill="#4c4650"/><rect x="46" y="30" width="2" height="2" fill="#aaa086"/><rect x="0" y="32" width="2" height="2" fill="#c8bc9c"/><rect x="2" y="32" width="2" height="2" fill="#4c4650"/><rect x="4" y="32" width="2" height="2" fill="#c8bc9c"/><rect x="6" y="32" width="2" height="2" fill="#aaa086"/><rect x="8" y="32" width="2" height="2" fill="#4c4650"/><rect x="12" y="32" width="2" height="2" fill="#c8bc9c"/><rect x="14" y="32" width="2" height="2" fill="#c8bc9c"/><rect x="16" y="32" width="2" height="2" fill="#aaa086"/><rect x="20" y="32" width="2" height="2" fill="#aaa086"/><rect x="22" y="32" width="2" height="2" fill="#aaa086"/><rect x="26" y="32" width="2" height="2" fill="#aaa086"/><rect x="32" y="32" width="2" height="2" fill="#4c4650"/><rect x="34" y="32" width="2" height="2" fill="#c8bc9c"/><rect x="36" y="32" width="2" height="2" fill="#2c2830"/><rect x="38" y="32" width="2" height="2" fill="#4c4650"/><rect x="40" y="32" width="2" height="2" fill="#c8bc9c"/><rect x="42" y="32" width="2" height="2" fill="#aaa086"/><rect x="46" y="32" width="2" height="2" fill="#aaa086"/><rect x="4" y="34" width="2" height="2" fill="#ddd0ae"/><rect x="6" y="34" width="2" height="2" fill="#aaa086"/><rect x="12" y="34" width="2" height="2" fill="#ddd0ae"/><rect x="14" y="34" width="2" height="2" fill="#aaa086"/><rect x="16" y="34" width="2" height="2" fill="#aaa086"/><rect x="20" y="34" width="2" height="2" fill="#aaa086"/><rect x="22" y="34" width="2" height="2" fill="#c8bc9c"/><rect x="24" y="34" width="2" height="2" fill="#c8bc9c"/><rect x="26" y="34" width="2" height="2" fill="#c8bc9c"/><rect x="28" y="34" width="2" height="2" fill="#4c4650"/><rect x="30" y="34" width="2" height="2" fill="#c8bc9c"/><rect x="32" y="34" width="2" height="2" fill="#c8bc9c"/><rect x="36" y="34" width="2" height="2" fill="#aaa086"/><rect x="38" y="34" width="2" height="2" fill="#aaa086"/><rect x="40" y="34" width="2" height="2" fill="#aaa086"/><rect x="42" y="34" width="2" height="2" fill="#c8bc9c"/><rect x="44" y="34" width="2" height="2" fill="#2c2830"/><rect x="46" y="34" width="2" height="2" fill="#4c4650"/><rect x="0" y="36" width="2" height="2" fill="#4c4650"/><rect x="2" y="36" width="2" height="2" fill="#4c4650"/><rect x="4" y="36" width="2" height="2" fill="#aaa086"/><rect x="6" y="36" width="2" height="2" fill="#c8bc9c"/><rect x="16" y="36" width="2" height="2" fill="#2c2830"/><rect x="18" y="36" width="2" height="2" fill="#4c4650"/><rect x="20" y="36" width="2" height="2" fill="#aaa086"/><rect x="24" y="36" width="2" height="2" fill="#4c4650"/><rect x="26" y="36" width="2" height="2" fill="#2c2830"/><rect x="28" y="36" width="2" height="2" fill="#aaa086"/><rect x="30" y="36" width="2" height="2" fill="#c8bc9c"/><rect x="32" y="36" width="2" height="2" fill="#4c4650"/><rect x="40" y="36" width="2" height="2" fill="#c8bc9c"/><rect x="42" y="36" width="2" height="2" fill="#c8bc9c"/><rect x="44" y="36" width="2" height="2" fill="#2c2830"/><rect x="0" y="38" width="2" height="2" fill="#c8bc9c"/><rect x="2" y="38" width="2" height="2" fill="#c8bc9c"/><rect x="6" y="38" width="2" height="2" fill="#c8bc9c"/><rect x="8" y="38" width="2" height="2" fill="#c8bc9c"/><rect x="10" y="38" width="2" height="2" fill="#4c4650"/><rect x="14" y="38" width="2" height="2" fill="#ddd0ae"/><rect x="16" y="38" width="2" height="2" fill="#c8bc9c"/><rect x="18" y="38" width="2" height="2" fill="#ddd0ae"/><rect x="20" y="38" width="2" height="2" fill="#aaa086"/><rect x="22" y="38" width="2" height="2" fill="#aaa086"/><rect x="24" y="38" width="2" height="2" fill="#4c4650"/><rect x="26" y="38" width="2" height="2" fill="#ddd0ae"/><rect x="30" y="38" width="2" height="2" fill="#aaa086"/><rect x="32" y="38" width="2" height="2" fill="#c8bc9c"/><rect x="34" y="38" width="2" height="2" fill="#aaa086"/><rect x="36" y="38" width="2" height="2" fill="#aaa086"/><rect x="0" y="40" width="2" height="2" fill="#c8bc9c"/><rect x="2" y="40" width="2" height="2" fill="#ddd0ae"/><rect x="4" y="40" width="2" height="2" fill="#c8bc9c"/><rect x="6" y="40" width="2" height="2" fill="#c8bc9c"/><rect x="8" y="40" width="2" height="2" fill="#4c4650"/><rect x="10" y="40" width="2" height="2" fill="#c8bc9c"/><rect x="12" y="40" width="2" height="2" fill="#aaa086"/><rect x="14" y="40" width="2" height="2" fill="#aaa086"/><rect x="18" y="40" width="2" height="2" fill="#c8bc9c"/><rect x="20" y="40" width="2" height="2" fill="#aaa086"/><rect x="22" y="40" width="2" height="2" fill="#ddd0ae"/><rect x="24" y="40" width="2" height="2" fill="#aaa086"/><rect x="26" y="40" width="2" height="2" fill="#c8bc9c"/><rect x="28" y="40" width="2" height="2" fill="#ddd0ae"/><rect x="34" y="40" width="2" height="2" fill="#aaa086"/><rect x="36" y="40" width="2" height="2" fill="#c8bc9c"/><rect x="40" y="40" width="2" height="2" fill="#4c4650"/><rect x="42" y="40" width="2" height="2" fill="#ddd0ae"/><rect x="44" y="40" width="2" height="2" fill="#4c4650"/><rect x="46" y="40" width="2" height="2" fill="#c8bc9c"/><rect x="4" y="42" width="2" height="2" fill="#2c2830"/><rect x="6" y="42" width="2" height="2" fill="#4c4650"/><rect x="8" y="42" width="2" height="2" fill="#ddd0ae"/><rect x="12" y="42" width="2" height="2" fill="#c8bc9c"/><rect x="16" y="42" width="2" height="2" fill="#c8bc9c"/><rect x="20" y="42" width="2" height="2" fill="#c8bc9c"/><rect x="22" y="42" width="2" height="2" fill="#c8bc9c"/><rect x="24" y="42" width="2" height="2" fill="#c8bc9c"/><rect x="30" y="42" width="2" height="2" fill="#ddd0ae"/><rect x="34" y="42" width="2" height="2" fill="#4c4650"/><rect x="36" y="42" width="2" height="2" fill="#c8bc9c"/><rect x="38" y="42" width="2" height="2" fill="#4c4650"/><rect x="42" y="42" width="2" height="2" fill="#c8bc9c"/><rect x="46" y="42" width="2" height="2" fill="#4c4650"/><rect x="0" y="44" width="2" height="2" fill="#2c2830"/><rect x="2" y="44" width="2" height="2" fill="#4c4650"/><rect x="4" y="44" width="2" height="2" fill="#2c2830"/><rect x="10" y="44" width="2" height="2" fill="#4c4650"/><rect x="12" y="44" width="2" height="2" fill="#4c4650"/><rect x="14" y="44" width="2" height="2" fill="#4c4650"/><rect x="16" y="44" width="2" height="2" fill="#c8bc9c"/><rect x="18" y="44" width="2" height="2" fill="#aaa086"/><rect x="20" y="44" width="2" height="2" fill="#aaa086"/><rect x="22" y="44" width="2" height="2" fill="#2c2830"/><rect x="24" y="44" width="2" height="2" fill="#c8bc9c"/><rect x="26" y="44" width="2" height="2" fill="#c8bc9c"/><rect x="28" y="44" width="2" height="2" fill="#aaa086"/><rect x="34" y="44" width="2" height="2" fill="#c8bc9c"/><rect x="38" y="44" width="2" height="2" fill="#aaa086"/><rect x="40" y="44" width="2" height="2" fill="#aaa086"/><rect x="42" y="44" width="2" height="2" fill="#c8bc9c"/><rect x="0" y="46" width="2" height="2" fill="#c8bc9c"/><rect x="4" y="46" width="2" height="2" fill="#c8bc9c"/><rect x="6" y="46" width="2" height="2" fill="#4c4650"/><rect x="8" y="46" width="2" height="2" fill="#c8bc9c"/><rect x="12" y="46" width="2" height="2" fill="#aaa086"/><rect x="18" y="46" width="2" height="2" fill="#c8bc9c"/><rect x="20" y="46" width="2" height="2" fill="#c8bc9c"/><rect x="24" y="46" width="2" height="2" fill="#c8bc9c"/><rect x="26" y="46" width="2" height="2" fill="#c8bc9c"/><rect x="28" y="46" width="2" height="2" fill="#aaa086"/><rect x="30" y="46" width="2" height="2" fill="#4c4650"/><rect x="32" y="46" width="2" height="2" fill="#2c2830"/><rect x="34" y="46" width="2" height="2" fill="#aaa086"/><rect x="36" y="46" width="2" height="2" fill="#aaa086"/><rect x="38" y="46" width="2" height="2" fill="#4c4650"/><rect x="40" y="46" width="2" height="2" fill="#c8bc9c"/><rect x="42" y="46" width="2" height="2" fill="#aaa086"/><rect x="44" y="46" width="2" height="2" fill="#aaa086"/><rect x="46" y="46" width="2" height="2" fill="#ddd0ae"/></pattern><pattern id="oct" x="2076" y="1324" width="48" height="48" patternUnits="userSpaceOnUse"><rect width="48" height="48" fill="#5e565a"/><rect x="0" y="0" width="2" height="2" fill="#c4b8a4"/><rect x="2" y="0" width="2" height="2" fill="#766c6c"/><rect x="4" y="0" width="2" height="2" fill="#a89a8c"/><rect x="6" y="0" width="2" height="2" fill="#46404a"/><rect x="8" y="0" width="2" height="2" fill="#2e2a32"/><rect x="16" y="0" width="2" height="2" fill="#a89a8c"/><rect x="18" y="0" width="2" height="2" fill="#766c6c"/><rect x="20" y="0" width="2" height="2" fill="#a89a8c"/><rect x="24" y="0" width="2" height="2" fill="#c4b8a4"/><rect x="26" y="0" width="2" height="2" fill="#766c6c"/><rect x="34" y="0" width="2" height="2" fill="#2e2a32"/><rect x="36" y="0" width="2" height="2" fill="#46404a"/><rect x="38" y="0" width="2" height="2" fill="#18161c"/><rect x="40" y="0" width="2" height="2" fill="#766c6c"/><rect x="42" y="0" width="2" height="2" fill="#a89a8c"/><rect x="44" y="0" width="2" height="2" fill="#2e2a32"/><rect x="46" y="0" width="2" height="2" fill="#2e2a32"/><rect x="0" y="2" width="2" height="2" fill="#a89a8c"/><rect x="4" y="2" width="2" height="2" fill="#766c6c"/><rect x="6" y="2" width="2" height="2" fill="#46404a"/><rect x="8" y="2" width="2" height="2" fill="#c4b8a4"/><rect x="12" y="2" width="2" height="2" fill="#766c6c"/><rect x="16" y="2" width="2" height="2" fill="#c4b8a4"/><rect x="18" y="2" width="2" height="2" fill="#2e2a32"/><rect x="20" y="2" width="2" height="2" fill="#18161c"/><rect x="22" y="2" width="2" height="2" fill="#46404a"/><rect x="26" y="2" width="2" height="2" fill="#a89a8c"/><rect x="28" y="2" width="2" height="2" fill="#46404a"/><rect x="30" y="2" width="2" height="2" fill="#2e2a32"/><rect x="32" y="2" width="2" height="2" fill="#2e2a32"/><rect x="34" y="2" width="2" height="2" fill="#2e2a32"/><rect x="36" y="2" width="2" height="2" fill="#c4b8a4"/><rect x="38" y="2" width="2" height="2" fill="#18161c"/><rect x="40" y="2" width="2" height="2" fill="#766c6c"/><rect x="42" y="2" width="2" height="2" fill="#18161c"/><rect x="44" y="2" width="2" height="2" fill="#766c6c"/><rect x="0" y="4" width="2" height="2" fill="#46404a"/><rect x="2" y="4" width="2" height="2" fill="#2e2a32"/><rect x="6" y="4" width="2" height="2" fill="#18161c"/><rect x="10" y="4" width="2" height="2" fill="#766c6c"/><rect x="12" y="4" width="2" height="2" fill="#2e2a32"/><rect x="14" y="4" width="2" height="2" fill="#46404a"/><rect x="16" y="4" width="2" height="2" fill="#2e2a32"/><rect x="18" y="4" width="2" height="2" fill="#a89a8c"/><rect x="20" y="4" width="2" height="2" fill="#a89a8c"/><rect x="24" y="4" width="2" height="2" fill="#766c6c"/><rect x="26" y="4" width="2" height="2" fill="#2e2a32"/><rect x="28" y="4" width="2" height="2" fill="#c4b8a4"/><rect x="30" y="4" width="2" height="2" fill="#a89a8c"/><rect x="32" y="4" width="2" height="2" fill="#a89a8c"/><rect x="34" y="4" width="2" height="2" fill="#a89a8c"/><rect x="36" y="4" width="2" height="2" fill="#18161c"/><rect x="38" y="4" width="2" height="2" fill="#46404a"/><rect x="40" y="4" width="2" height="2" fill="#46404a"/><rect x="42" y="4" width="2" height="2" fill="#766c6c"/><rect x="44" y="4" width="2" height="2" fill="#2e2a32"/><rect x="0" y="6" width="2" height="2" fill="#46404a"/><rect x="2" y="6" width="2" height="2" fill="#2e2a32"/><rect x="10" y="6" width="2" height="2" fill="#c4b8a4"/><rect x="12" y="6" width="2" height="2" fill="#46404a"/><rect x="16" y="6" width="2" height="2" fill="#46404a"/><rect x="18" y="6" width="2" height="2" fill="#a89a8c"/><rect x="20" y="6" width="2" height="2" fill="#766c6c"/><rect x="22" y="6" width="2" height="2" fill="#46404a"/><rect x="24" y="6" width="2" height="2" fill="#766c6c"/><rect x="26" y="6" width="2" height="2" fill="#46404a"/><rect x="28" y="6" width="2" height="2" fill="#2e2a32"/><rect x="32" y="6" width="2" height="2" fill="#766c6c"/><rect x="34" y="6" width="2" height="2" fill="#766c6c"/><rect x="38" y="6" width="2" height="2" fill="#2e2a32"/><rect x="40" y="6" width="2" height="2" fill="#a89a8c"/><rect x="44" y="6" width="2" height="2" fill="#a89a8c"/><rect x="46" y="6" width="2" height="2" fill="#2e2a32"/><rect x="0" y="8" width="2" height="2" fill="#2e2a32"/><rect x="2" y="8" width="2" height="2" fill="#766c6c"/><rect x="4" y="8" width="2" height="2" fill="#2e2a32"/><rect x="6" y="8" width="2" height="2" fill="#18161c"/><rect x="8" y="8" width="2" height="2" fill="#46404a"/><rect x="10" y="8" width="2" height="2" fill="#18161c"/><rect x="12" y="8" width="2" height="2" fill="#766c6c"/><rect x="14" y="8" width="2" height="2" fill="#766c6c"/><rect x="16" y="8" width="2" height="2" fill="#766c6c"/><rect x="18" y="8" width="2" height="2" fill="#46404a"/><rect x="20" y="8" width="2" height="2" fill="#2e2a32"/><rect x="22" y="8" width="2" height="2" fill="#766c6c"/><rect x="24" y="8" width="2" height="2" fill="#766c6c"/><rect x="26" y="8" width="2" height="2" fill="#766c6c"/><rect x="28" y="8" width="2" height="2" fill="#a89a8c"/><rect x="34" y="8" width="2" height="2" fill="#2e2a32"/><rect x="36" y="8" width="2" height="2" fill="#766c6c"/><rect x="38" y="8" width="2" height="2" fill="#c4b8a4"/><rect x="40" y="8" width="2" height="2" fill="#c4b8a4"/><rect x="42" y="8" width="2" height="2" fill="#a89a8c"/><rect x="44" y="8" width="2" height="2" fill="#18161c"/><rect x="46" y="8" width="2" height="2" fill="#a89a8c"/><rect x="0" y="10" width="2" height="2" fill="#c4b8a4"/><rect x="4" y="10" width="2" height="2" fill="#c4b8a4"/><rect x="6" y="10" width="2" height="2" fill="#766c6c"/><rect x="8" y="10" width="2" height="2" fill="#18161c"/><rect x="10" y="10" width="2" height="2" fill="#46404a"/><rect x="12" y="10" width="2" height="2" fill="#766c6c"/><rect x="14" y="10" width="2" height="2" fill="#46404a"/><rect x="16" y="10" width="2" height="2" fill="#c4b8a4"/><rect x="18" y="10" width="2" height="2" fill="#766c6c"/><rect x="22" y="10" width="2" height="2" fill="#766c6c"/><rect x="24" y="10" width="2" height="2" fill="#46404a"/><rect x="26" y="10" width="2" height="2" fill="#a89a8c"/><rect x="28" y="10" width="2" height="2" fill="#18161c"/><rect x="30" y="10" width="2" height="2" fill="#766c6c"/><rect x="32" y="10" width="2" height="2" fill="#2e2a32"/><rect x="36" y="10" width="2" height="2" fill="#2e2a32"/><rect x="40" y="10" width="2" height="2" fill="#766c6c"/><rect x="42" y="10" width="2" height="2" fill="#46404a"/><rect x="44" y="10" width="2" height="2" fill="#46404a"/><rect x="46" y="10" width="2" height="2" fill="#766c6c"/><rect x="0" y="12" width="2" height="2" fill="#2e2a32"/><rect x="4" y="12" width="2" height="2" fill="#766c6c"/><rect x="6" y="12" width="2" height="2" fill="#766c6c"/><rect x="8" y="12" width="2" height="2" fill="#c4b8a4"/><rect x="10" y="12" width="2" height="2" fill="#2e2a32"/><rect x="12" y="12" width="2" height="2" fill="#46404a"/><rect x="14" y="12" width="2" height="2" fill="#a89a8c"/><rect x="16" y="12" width="2" height="2" fill="#a89a8c"/><rect x="18" y="12" width="2" height="2" fill="#a89a8c"/><rect x="20" y="12" width="2" height="2" fill="#766c6c"/><rect x="22" y="12" width="2" height="2" fill="#46404a"/><rect x="26" y="12" width="2" height="2" fill="#766c6c"/><rect x="28" y="12" width="2" height="2" fill="#c4b8a4"/><rect x="30" y="12" width="2" height="2" fill="#a89a8c"/><rect x="34" y="12" width="2" height="2" fill="#766c6c"/><rect x="36" y="12" width="2" height="2" fill="#46404a"/><rect x="38" y="12" width="2" height="2" fill="#46404a"/><rect x="40" y="12" width="2" height="2" fill="#c4b8a4"/><rect x="42" y="12" width="2" height="2" fill="#2e2a32"/><rect x="44" y="12" width="2" height="2" fill="#2e2a32"/><rect x="46" y="12" width="2" height="2" fill="#766c6c"/><rect x="0" y="14" width="2" height="2" fill="#46404a"/><rect x="2" y="14" width="2" height="2" fill="#a89a8c"/><rect x="4" y="14" width="2" height="2" fill="#a89a8c"/><rect x="6" y="14" width="2" height="2" fill="#766c6c"/><rect x="8" y="14" width="2" height="2" fill="#18161c"/><rect x="16" y="14" width="2" height="2" fill="#766c6c"/><rect x="18" y="14" width="2" height="2" fill="#766c6c"/><rect x="24" y="14" width="2" height="2" fill="#766c6c"/><rect x="26" y="14" width="2" height="2" fill="#766c6c"/><rect x="28" y="14" width="2" height="2" fill="#766c6c"/><rect x="30" y="14" width="2" height="2" fill="#c4b8a4"/><rect x="34" y="14" width="2" height="2" fill="#2e2a32"/><rect x="36" y="14" width="2" height="2" fill="#46404a"/><rect x="38" y="14" width="2" height="2" fill="#18161c"/><rect x="40" y="14" width="2" height="2" fill="#a89a8c"/><rect x="42" y="14" width="2" height="2" fill="#46404a"/><rect x="44" y="14" width="2" height="2" fill="#766c6c"/><rect x="46" y="14" width="2" height="2" fill="#18161c"/><rect x="0" y="16" width="2" height="2" fill="#a89a8c"/><rect x="2" y="16" width="2" height="2" fill="#766c6c"/><rect x="4" y="16" width="2" height="2" fill="#46404a"/><rect x="6" y="16" width="2" height="2" fill="#2e2a32"/><rect x="18" y="16" width="2" height="2" fill="#766c6c"/><rect x="22" y="16" width="2" height="2" fill="#c4b8a4"/><rect x="24" y="16" width="2" height="2" fill="#c4b8a4"/><rect x="26" y="16" width="2" height="2" fill="#46404a"/><rect x="28" y="16" width="2" height="2" fill="#46404a"/><rect x="30" y="16" width="2" height="2" fill="#c4b8a4"/><rect x="32" y="16" width="2" height="2" fill="#18161c"/><rect x="34" y="16" width="2" height="2" fill="#18161c"/><rect x="36" y="16" width="2" height="2" fill="#766c6c"/><rect x="38" y="16" width="2" height="2" fill="#18161c"/><rect x="0" y="18" width="2" height="2" fill="#2e2a32"/><rect x="2" y="18" width="2" height="2" fill="#2e2a32"/><rect x="4" y="18" width="2" height="2" fill="#766c6c"/><rect x="6" y="18" width="2" height="2" fill="#c4b8a4"/><rect x="10" y="18" width="2" height="2" fill="#2e2a32"/><rect x="12" y="18" width="2" height="2" fill="#766c6c"/><rect x="14" y="18" width="2" height="2" fill="#2e2a32"/><rect x="18" y="18" width="2" height="2" fill="#766c6c"/><rect x="20" y="18" width="2" height="2" fill="#2e2a32"/><rect x="22" y="18" width="2" height="2" fill="#766c6c"/><rect x="24" y="18" width="2" height="2" fill="#766c6c"/><rect x="26" y="18" width="2" height="2" fill="#18161c"/><rect x="28" y="18" width="2" height="2" fill="#18161c"/><rect x="32" y="18" width="2" height="2" fill="#c4b8a4"/><rect x="34" y="18" width="2" height="2" fill="#c4b8a4"/><rect x="36" y="18" width="2" height="2" fill="#a89a8c"/><rect x="40" y="18" width="2" height="2" fill="#2e2a32"/><rect x="42" y="18" width="2" height="2" fill="#2e2a32"/><rect x="44" y="18" width="2" height="2" fill="#c4b8a4"/><rect x="46" y="18" width="2" height="2" fill="#18161c"/><rect x="0" y="20" width="2" height="2" fill="#2e2a32"/><rect x="2" y="20" width="2" height="2" fill="#a89a8c"/><rect x="4" y="20" width="2" height="2" fill="#766c6c"/><rect x="6" y="20" width="2" height="2" fill="#766c6c"/><rect x="8" y="20" width="2" height="2" fill="#46404a"/><rect x="10" y="20" width="2" height="2" fill="#766c6c"/><rect x="12" y="20" width="2" height="2" fill="#a89a8c"/><rect x="14" y="20" width="2" height="2" fill="#a89a8c"/><rect x="16" y="20" width="2" height="2" fill="#46404a"/><rect x="18" y="20" width="2" height="2" fill="#766c6c"/><rect x="22" y="20" width="2" height="2" fill="#2e2a32"/><rect x="24" y="20" width="2" height="2" fill="#a89a8c"/><rect x="26" y="20" width="2" height="2" fill="#766c6c"/><rect x="30" y="20" width="2" height="2" fill="#a89a8c"/><rect x="34" y="20" width="2" height="2" fill="#2e2a32"/><rect x="36" y="20" width="2" height="2" fill="#18161c"/><rect x="38" y="20" width="2" height="2" fill="#766c6c"/><rect x="40" y="20" width="2" height="2" fill="#2e2a32"/><rect x="42" y="20" width="2" height="2" fill="#18161c"/><rect x="46" y="20" width="2" height="2" fill="#2e2a32"/><rect x="0" y="22" width="2" height="2" fill="#46404a"/><rect x="4" y="22" width="2" height="2" fill="#c4b8a4"/><rect x="6" y="22" width="2" height="2" fill="#2e2a32"/><rect x="10" y="22" width="2" height="2" fill="#a89a8c"/><rect x="12" y="22" width="2" height="2" fill="#2e2a32"/><rect x="14" y="22" width="2" height="2" fill="#2e2a32"/><rect x="16" y="22" width="2" height="2" fill="#766c6c"/><rect x="20" y="22" width="2" height="2" fill="#a89a8c"/><rect x="22" y="22" width="2" height="2" fill="#18161c"/><rect x="24" y="22" width="2" height="2" fill="#2e2a32"/><rect x="26" y="22" width="2" height="2" fill="#2e2a32"/><rect x="30" y="22" width="2" height="2" fill="#a89a8c"/><rect x="32" y="22" width="2" height="2" fill="#18161c"/><rect x="34" y="22" width="2" height="2" fill="#766c6c"/><rect x="36" y="22" width="2" height="2" fill="#766c6c"/><rect x="40" y="22" width="2" height="2" fill="#2e2a32"/><rect x="42" y="22" width="2" height="2" fill="#46404a"/><rect x="44" y="22" width="2" height="2" fill="#2e2a32"/><rect x="46" y="22" width="2" height="2" fill="#766c6c"/><rect x="0" y="24" width="2" height="2" fill="#46404a"/><rect x="2" y="24" width="2" height="2" fill="#766c6c"/><rect x="4" y="24" width="2" height="2" fill="#766c6c"/><rect x="10" y="24" width="2" height="2" fill="#c4b8a4"/><rect x="12" y="24" width="2" height="2" fill="#2e2a32"/><rect x="14" y="24" width="2" height="2" fill="#46404a"/><rect x="16" y="24" width="2" height="2" fill="#46404a"/><rect x="18" y="24" width="2" height="2" fill="#46404a"/><rect x="20" y="24" width="2" height="2" fill="#2e2a32"/><rect x="22" y="24" width="2" height="2" fill="#18161c"/><rect x="24" y="24" width="2" height="2" fill="#c4b8a4"/><rect x="26" y="24" width="2" height="2" fill="#46404a"/><rect x="30" y="24" width="2" height="2" fill="#46404a"/><rect x="32" y="24" width="2" height="2" fill="#2e2a32"/><rect x="34" y="24" width="2" height="2" fill="#18161c"/><rect x="36" y="24" width="2" height="2" fill="#18161c"/><rect x="38" y="24" width="2" height="2" fill="#a89a8c"/><rect x="40" y="24" width="2" height="2" fill="#2e2a32"/><rect x="42" y="24" width="2" height="2" fill="#a89a8c"/><rect x="44" y="24" width="2" height="2" fill="#2e2a32"/><rect x="46" y="24" width="2" height="2" fill="#a89a8c"/><rect x="0" y="26" width="2" height="2" fill="#766c6c"/><rect x="6" y="26" width="2" height="2" fill="#2e2a32"/><rect x="10" y="26" width="2" height="2" fill="#2e2a32"/><rect x="12" y="26" width="2" height="2" fill="#46404a"/><rect x="14" y="26" width="2" height="2" fill="#46404a"/><rect x="20" y="26" width="2" height="2" fill="#46404a"/><rect x="22" y="26" width="2" height="2" fill="#18161c"/><rect x="24" y="26" width="2" height="2" fill="#766c6c"/><rect x="28" y="26" width="2" height="2" fill="#a89a8c"/><rect x="30" y="26" width="2" height="2" fill="#18161c"/><rect x="32" y="26" width="2" height="2" fill="#18161c"/><rect x="38" y="26" width="2" height="2" fill="#2e2a32"/><rect x="40" y="26" width="2" height="2" fill="#a89a8c"/><rect x="42" y="26" width="2" height="2" fill="#c4b8a4"/><rect x="44" y="26" width="2" height="2" fill="#2e2a32"/><rect x="46" y="26" width="2" height="2" fill="#46404a"/><rect x="2" y="28" width="2" height="2" fill="#766c6c"/><rect x="4" y="28" width="2" height="2" fill="#18161c"/><rect x="6" y="28" width="2" height="2" fill="#766c6c"/><rect x="12" y="28" width="2" height="2" fill="#766c6c"/><rect x="14" y="28" width="2" height="2" fill="#2e2a32"/><rect x="16" y="28" width="2" height="2" fill="#2e2a32"/><rect x="18" y="28" width="2" height="2" fill="#2e2a32"/><rect x="20" y="28" width="2" height="2" fill="#766c6c"/><rect x="22" y="28" width="2" height="2" fill="#18161c"/><rect x="24" y="28" width="2" height="2" fill="#a89a8c"/><rect x="26" y="28" width="2" height="2" fill="#766c6c"/><rect x="28" y="28" width="2" height="2" fill="#a89a8c"/><rect x="30" y="28" width="2" height="2" fill="#766c6c"/><rect x="32" y="28" width="2" height="2" fill="#c4b8a4"/><rect x="36" y="28" width="2" height="2" fill="#2e2a32"/><rect x="38" y="28" width="2" height="2" fill="#c4b8a4"/><rect x="42" y="28" width="2" height="2" fill="#c4b8a4"/><rect x="44" y="28" width="2" height="2" fill="#2e2a32"/><rect x="46" y="28" width="2" height="2" fill="#766c6c"/><rect x="0" y="30" width="2" height="2" fill="#766c6c"/><rect x="2" y="30" width="2" height="2" fill="#46404a"/><rect x="6" y="30" width="2" height="2" fill="#766c6c"/><rect x="10" y="30" width="2" height="2" fill="#2e2a32"/><rect x="12" y="30" width="2" height="2" fill="#a89a8c"/><rect x="16" y="30" width="2" height="2" fill="#a89a8c"/><rect x="18" y="30" width="2" height="2" fill="#2e2a32"/><rect x="20" y="30" width="2" height="2" fill="#766c6c"/><rect x="22" y="30" width="2" height="2" fill="#18161c"/><rect x="24" y="30" width="2" height="2" fill="#2e2a32"/><rect x="26" y="30" width="2" height="2" fill="#766c6c"/><rect x="28" y="30" width="2" height="2" fill="#c4b8a4"/><rect x="30" y="30" width="2" height="2" fill="#18161c"/><rect x="32" y="30" width="2" height="2" fill="#18161c"/><rect x="34" y="30" width="2" height="2" fill="#18161c"/><rect x="36" y="30" width="2" height="2" fill="#a89a8c"/><rect x="40" y="30" width="2" height="2" fill="#18161c"/><rect x="44" y="30" width="2" height="2" fill="#2e2a32"/><rect x="46" y="30" width="2" height="2" fill="#c4b8a4"/><rect x="0" y="32" width="2" height="2" fill="#766c6c"/><rect x="2" y="32" width="2" height="2" fill="#2e2a32"/><rect x="4" y="32" width="2" height="2" fill="#18161c"/><rect x="6" y="32" width="2" height="2" fill="#a89a8c"/><rect x="8" y="32" width="2" height="2" fill="#766c6c"/><rect x="10" y="32" width="2" height="2" fill="#46404a"/><rect x="14" y="32" width="2" height="2" fill="#a89a8c"/><rect x="16" y="32" width="2" height="2" fill="#766c6c"/><rect x="18" y="32" width="2" height="2" fill="#766c6c"/><rect x="22" y="32" width="2" height="2" fill="#2e2a32"/><rect x="28" y="32" width="2" height="2" fill="#a89a8c"/><rect x="32" y="32" width="2" height="2" fill="#18161c"/><rect x="34" y="32" width="2" height="2" fill="#a89a8c"/><rect x="36" y="32" width="2" height="2" fill="#a89a8c"/><rect x="38" y="32" width="2" height="2" fill="#46404a"/><rect x="40" y="32" width="2" height="2" fill="#c4b8a4"/><rect x="42" y="32" width="2" height="2" fill="#a89a8c"/><rect x="44" y="32" width="2" height="2" fill="#46404a"/><rect x="46" y="32" width="2" height="2" fill="#766c6c"/><rect x="0" y="34" width="2" height="2" fill="#2e2a32"/><rect x="2" y="34" width="2" height="2" fill="#766c6c"/><rect x="4" y="34" width="2" height="2" fill="#a89a8c"/><rect x="6" y="34" width="2" height="2" fill="#a89a8c"/><rect x="8" y="34" width="2" height="2" fill="#46404a"/><rect x="10" y="34" width="2" height="2" fill="#2e2a32"/><rect x="12" y="34" width="2" height="2" fill="#46404a"/><rect x="20" y="34" width="2" height="2" fill="#c4b8a4"/><rect x="22" y="34" width="2" height="2" fill="#766c6c"/><rect x="28" y="34" width="2" height="2" fill="#46404a"/><rect x="30" y="34" width="2" height="2" fill="#766c6c"/><rect x="32" y="34" width="2" height="2" fill="#46404a"/><rect x="36" y="34" width="2" height="2" fill="#766c6c"/><rect x="40" y="34" width="2" height="2" fill="#c4b8a4"/><rect x="42" y="34" width="2" height="2" fill="#766c6c"/><rect x="44" y="34" width="2" height="2" fill="#766c6c"/><rect x="46" y="34" width="2" height="2" fill="#a89a8c"/><rect x="0" y="36" width="2" height="2" fill="#18161c"/><rect x="6" y="36" width="2" height="2" fill="#766c6c"/><rect x="12" y="36" width="2" height="2" fill="#2e2a32"/><rect x="14" y="36" width="2" height="2" fill="#766c6c"/><rect x="16" y="36" width="2" height="2" fill="#46404a"/><rect x="18" y="36" width="2" height="2" fill="#c4b8a4"/><rect x="22" y="36" width="2" height="2" fill="#766c6c"/><rect x="24" y="36" width="2" height="2" fill="#46404a"/><rect x="28" y="36" width="2" height="2" fill="#c4b8a4"/><rect x="30" y="36" width="2" height="2" fill="#a89a8c"/><rect x="32" y="36" width="2" height="2" fill="#a89a8c"/><rect x="36" y="36" width="2" height="2" fill="#c4b8a4"/><rect x="38" y="36" width="2" height="2" fill="#766c6c"/><rect x="40" y="36" width="2" height="2" fill="#46404a"/><rect x="42" y="36" width="2" height="2" fill="#2e2a32"/><rect x="46" y="36" width="2" height="2" fill="#a89a8c"/><rect x="0" y="38" width="2" height="2" fill="#a89a8c"/><rect x="2" y="38" width="2" height="2" fill="#18161c"/><rect x="8" y="38" width="2" height="2" fill="#2e2a32"/><rect x="12" y="38" width="2" height="2" fill="#2e2a32"/><rect x="14" y="38" width="2" height="2" fill="#766c6c"/><rect x="16" y="38" width="2" height="2" fill="#766c6c"/><rect x="22" y="38" width="2" height="2" fill="#2e2a32"/><rect x="24" y="38" width="2" height="2" fill="#766c6c"/><rect x="26" y="38" width="2" height="2" fill="#2e2a32"/><rect x="28" y="38" width="2" height="2" fill="#766c6c"/><rect x="30" y="38" width="2" height="2" fill="#46404a"/><rect x="34" y="38" width="2" height="2" fill="#a89a8c"/><rect x="36" y="38" width="2" height="2" fill="#766c6c"/><rect x="38" y="38" width="2" height="2" fill="#766c6c"/><rect x="40" y="38" width="2" height="2" fill="#46404a"/><rect x="42" y="38" width="2" height="2" fill="#766c6c"/><rect x="44" y="38" width="2" height="2" fill="#766c6c"/><rect x="46" y="38" width="2" height="2" fill="#2e2a32"/><rect x="0" y="40" width="2" height="2" fill="#46404a"/><rect x="2" y="40" width="2" height="2" fill="#46404a"/><rect x="4" y="40" width="2" height="2" fill="#a89a8c"/><rect x="8" y="40" width="2" height="2" fill="#a89a8c"/><rect x="10" y="40" width="2" height="2" fill="#2e2a32"/><rect x="12" y="40" width="2" height="2" fill="#46404a"/><rect x="14" y="40" width="2" height="2" fill="#a89a8c"/><rect x="16" y="40" width="2" height="2" fill="#766c6c"/><rect x="18" y="40" width="2" height="2" fill="#766c6c"/><rect x="20" y="40" width="2" height="2" fill="#18161c"/><rect x="24" y="40" width="2" height="2" fill="#c4b8a4"/><rect x="26" y="40" width="2" height="2" fill="#a89a8c"/><rect x="30" y="40" width="2" height="2" fill="#766c6c"/><rect x="32" y="40" width="2" height="2" fill="#46404a"/><rect x="34" y="40" width="2" height="2" fill="#766c6c"/><rect x="38" y="40" width="2" height="2" fill="#18161c"/><rect x="40" y="40" width="2" height="2" fill="#2e2a32"/><rect x="42" y="40" width="2" height="2" fill="#766c6c"/><rect x="44" y="40" width="2" height="2" fill="#c4b8a4"/><rect x="46" y="40" width="2" height="2" fill="#a89a8c"/><rect x="0" y="42" width="2" height="2" fill="#2e2a32"/><rect x="2" y="42" width="2" height="2" fill="#a89a8c"/><rect x="8" y="42" width="2" height="2" fill="#c4b8a4"/><rect x="10" y="42" width="2" height="2" fill="#2e2a32"/><rect x="12" y="42" width="2" height="2" fill="#46404a"/><rect x="16" y="42" width="2" height="2" fill="#a89a8c"/><rect x="20" y="42" width="2" height="2" fill="#18161c"/><rect x="22" y="42" width="2" height="2" fill="#46404a"/><rect x="24" y="42" width="2" height="2" fill="#46404a"/><rect x="26" y="42" width="2" height="2" fill="#766c6c"/><rect x="30" y="42" width="2" height="2" fill="#2e2a32"/><rect x="32" y="42" width="2" height="2" fill="#a89a8c"/><rect x="36" y="42" width="2" height="2" fill="#766c6c"/><rect x="38" y="42" width="2" height="2" fill="#a89a8c"/><rect x="42" y="42" width="2" height="2" fill="#766c6c"/><rect x="44" y="42" width="2" height="2" fill="#18161c"/><rect x="46" y="42" width="2" height="2" fill="#18161c"/><rect x="0" y="44" width="2" height="2" fill="#2e2a32"/><rect x="4" y="44" width="2" height="2" fill="#c4b8a4"/><rect x="8" y="44" width="2" height="2" fill="#766c6c"/><rect x="12" y="44" width="2" height="2" fill="#18161c"/><rect x="14" y="44" width="2" height="2" fill="#766c6c"/><rect x="16" y="44" width="2" height="2" fill="#2e2a32"/><rect x="18" y="44" width="2" height="2" fill="#a89a8c"/><rect x="20" y="44" width="2" height="2" fill="#766c6c"/><rect x="22" y="44" width="2" height="2" fill="#18161c"/><rect x="24" y="44" width="2" height="2" fill="#2e2a32"/><rect x="28" y="44" width="2" height="2" fill="#766c6c"/><rect x="30" y="44" width="2" height="2" fill="#18161c"/><rect x="32" y="44" width="2" height="2" fill="#2e2a32"/><rect x="34" y="44" width="2" height="2" fill="#766c6c"/><rect x="36" y="44" width="2" height="2" fill="#18161c"/><rect x="38" y="44" width="2" height="2" fill="#a89a8c"/><rect x="40" y="44" width="2" height="2" fill="#46404a"/><rect x="42" y="44" width="2" height="2" fill="#766c6c"/><rect x="0" y="46" width="2" height="2" fill="#18161c"/><rect x="2" y="46" width="2" height="2" fill="#2e2a32"/><rect x="4" y="46" width="2" height="2" fill="#2e2a32"/><rect x="6" y="46" width="2" height="2" fill="#18161c"/><rect x="8" y="46" width="2" height="2" fill="#766c6c"/><rect x="10" y="46" width="2" height="2" fill="#766c6c"/><rect x="12" y="46" width="2" height="2" fill="#a89a8c"/><rect x="14" y="46" width="2" height="2" fill="#c4b8a4"/><rect x="16" y="46" width="2" height="2" fill="#a89a8c"/><rect x="18" y="46" width="2" height="2" fill="#2e2a32"/><rect x="20" y="46" width="2" height="2" fill="#c4b8a4"/><rect x="22" y="46" width="2" height="2" fill="#766c6c"/><rect x="28" y="46" width="2" height="2" fill="#766c6c"/><rect x="30" y="46" width="2" height="2" fill="#c4b8a4"/><rect x="34" y="46" width="2" height="2" fill="#18161c"/><rect x="42" y="46" width="2" height="2" fill="#2e2a32"/><rect x="44" y="46" width="2" height="2" fill="#766c6c"/><rect x="46" y="46" width="2" height="2" fill="#46404a"/></pattern></defs>
    <rect x="1760" y="1405" width="316" height="65" fill="url(#tan)"/>
    <path d="M2202 1324 H2379 L2504 1366 V1513 L2379 1556 H2202 L2076 1510 V1367 Z" fill="url(#oct)"/>
  </svg>

</div>
<div class="a" style="left:112px;top:76px;width:2400px;height:1504px;border-radius:30px;border:2px solid rgba(140,140,140,.55);pointer-events:none"></div>
</body></html>
